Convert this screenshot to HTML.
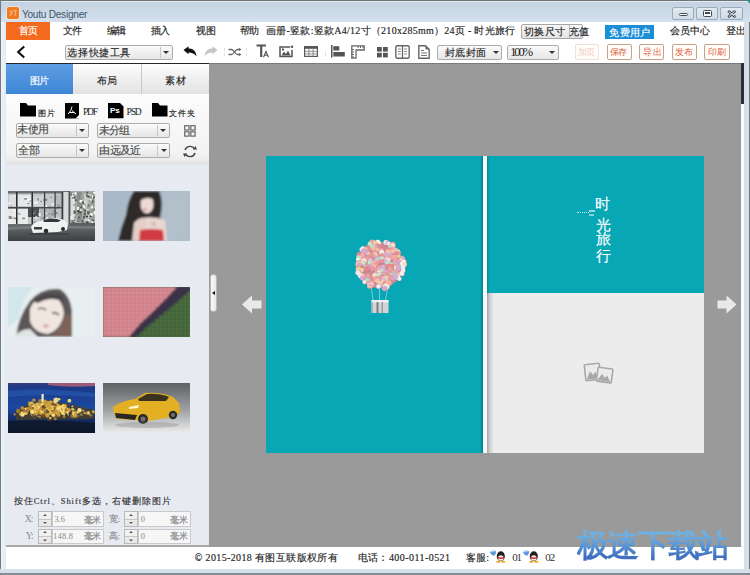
<!DOCTYPE html>
<html><head><meta charset="utf-8">
<style>
*{box-sizing:border-box}
html,body{margin:0;padding:0}
body{width:750px;height:575px;position:relative;overflow:hidden;background:#dbe5ee;font-family:"Liberation Serif",serif;color:#222}
.a{position:absolute}
.t{position:absolute;white-space:nowrap;line-height:1}
.combo{position:absolute;border:1px solid #acacac;border-radius:2px;background:linear-gradient(#fafafa,#e6e6e6)}
.combo .sp{position:absolute;top:1px;bottom:1px;width:1px;background:#c6c6c6}
.tri{position:absolute;width:0;height:0;border-left:3px solid transparent;border-right:3px solid transparent;border-top:3px solid #333}
.obtn{position:absolute;top:43.5px;height:16px;border:1px solid #c7a289;border-radius:2px;background:#fffdfa}
.spin{position:absolute;border:1px solid #b9b9b9;background:linear-gradient(#f4f4f4,#e6e6e6)}
.inp{position:absolute;border:1px solid #c9c9c9;background:#f6f6f6}
.thumb{position:absolute;width:87px;height:50px;overflow:hidden}
</style></head><body>
<!-- title bar -->
<div class="a" style="left:0;top:0;width:750px;height:22px;background:linear-gradient(#6c7476 0,#6c7476 1px,#e2eaee 1px,#e2eaee 2px,#c4d3e1 2px,#d4e0ee 22px)"></div>
<!-- app icon -->
<div class="a" style="left:6px;top:6px;width:14px;height:14px;background:#f2e6dc;border-radius:3px;opacity:0.8"></div>
<div class="a" style="left:7px;top:7px;width:12px;height:11.7px;background:#ef7a22;border-radius:2px"></div>
<svg class="a" style="left:7px;top:7px" width="12" height="12" viewBox="0 0 12 12"><path d="M2.5 3.5 L4.5 6 L3 9 M6 3.5 L4.5 6 M6.5 3.5 H10 M8.3 3.5 V9" stroke="#f9b27a" stroke-width="1.2" fill="none"/></svg>
<!-- window buttons -->
<div class="a" style="left:672px;top:7px;width:22px;height:12.5px;border:1px solid #9aaabb;border-radius:2px;background:linear-gradient(#e2e9f0,#cfdbe6)"></div>
<div class="a" style="left:678.5px;top:12.5px;width:9px;height:3.5px;border:1px solid #3c4a58;border-radius:1.5px;background:#fff"></div>
<div class="a" style="left:696px;top:7px;width:22px;height:12.5px;border:1px solid #9aaabb;border-radius:2px;background:linear-gradient(#e2e9f0,#cfdbe6)"></div>
<div class="a" style="left:702.5px;top:9.5px;width:9px;height:7px;border:1px solid #3c4a58;border-radius:1.5px;background:#fff"></div>
<div class="a" style="left:704.5px;top:12px;width:5px;height:2px;background:#3c4a58"></div>
<div class="a" style="left:720px;top:7px;width:23px;height:12.5px;border:1px solid #9aaabb;border-radius:2px;background:linear-gradient(#e2e9f0,#cfdbe6)"></div>
<svg class="a" style="left:726.5px;top:9.5px" width="10" height="8" viewBox="0 0 10 8"><path d="M2 1.6 L7.5 6.4 M7.5 1.6 L2 6.4" stroke="#3c4a58" stroke-width="2.6" stroke-linecap="round"/><path d="M2 1.6 L7.5 6.4 M7.5 1.6 L2 6.4" stroke="#fff" stroke-width="0.9" stroke-linecap="round"/></svg>

<!-- client white area -->
<div class="a" style="left:6px;top:22px;width:738px;height:41px;background:#fff"></div>

<!-- menu highlights -->
<div class="a" style="left:6px;top:22px;width:44px;height:18px;background:#f46a1f"></div>
<div class="a" style="left:520.5px;top:24px;width:62px;height:14.5px;border:1px solid #a6a6a6;border-radius:2px;background:linear-gradient(#f7f7f7,#e3e3e3)"></div>
<div class="a" style="left:568.5px;top:25px;width:1px;height:13px;background:#b8b8b8"></div>
<div class="a" style="left:604.5px;top:24.5px;width:49.5px;height:14.5px;background:#1b8ed6"></div>

<!-- toolbar -->
<svg class="a" style="left:15px;top:45px" width="12" height="14" viewBox="0 0 12 14"><path d="M9.2 1.5 L3.2 7 L9.2 12.5" stroke="#111" stroke-width="2.1" fill="none"/></svg>
<div class="combo" style="left:65px;top:44.5px;width:108px;height:15.5px"><div class="sp" style="left:93.5px"></div></div>
<div class="tri" style="left:163px;top:51px"></div>

<!-- undo/redo etc -->
<svg class="a" style="left:183px;top:46px" width="14" height="11" viewBox="0 0 14 11"><path d="M0.5 4 L5.5 0.2 L5.5 2.6 C10 2.6 13 5 13.5 10.5 C11.5 7.5 9 6.5 5.5 6.5 L5.5 8.2 Z" fill="#111"/></svg>
<svg class="a" style="left:204px;top:46px" width="14" height="11" viewBox="0 0 14 11"><path d="M13.5 4 L8.5 0.2 L8.5 2.6 C4 2.6 1 5 0.5 10.5 C2.5 7.5 5 6.5 8.5 6.5 L8.5 8.2 Z" fill="#c6c6c6"/></svg>
<div class="a" style="left:223.5px;top:48px;width:1px;height:8px;border-left:1px dotted #d8d8d8"></div>
<div class="a" style="left:245.5px;top:48px;width:1px;height:8px;border-left:1px dotted #d8d8d8"></div>
<svg class="a" style="left:228px;top:48px" width="14" height="8" viewBox="0 0 14 8"><path d="M0.5 1.5 H3.5 C6 1.5 7 6.5 9.5 6.5 H12 M0.5 6.5 H3.5 C6 6.5 7 1.5 9.5 1.5 H12" stroke="#666" stroke-width="1.3" fill="none"/><path d="M11 0 L13.5 1.5 L11 3 Z M11 5 L13.5 6.5 L11 8 Z" fill="#666"/></svg>
<!-- TA -->
<svg class="a" style="left:256px;top:44px" width="15" height="14" viewBox="0 0 15 14"><path d="M0.5 1.5 H10 M5.2 1.5 V13" stroke="#555" stroke-width="2.2" fill="none"/><path d="M7.5 13.3 L10 7.5 L12.5 13.3 M8.5 11.3 H11.5" stroke="#555" stroke-width="1.1" fill="none"/></svg>
<!-- image icon -->
<svg class="a" style="left:279px;top:45px" width="15" height="13" viewBox="0 0 15 13"><path d="M11 2 H1 V11.5 H13 V5" stroke="#555" stroke-width="1.5" fill="none"/><circle cx="13" cy="1.8" r="1.3" fill="#555"/><path d="M2.5 10.5 L5 6.5 L7 9 L9 5.5 L11.5 10.5 Z" fill="#555"/><rect x="3" y="3.5" width="2" height="2" fill="#555"/></svg>
<!-- table -->
<svg class="a" style="left:304px;top:46px" width="14" height="11" viewBox="0 0 14 11"><rect x="0.6" y="0.6" width="12.8" height="9.8" fill="none" stroke="#5a5a5a" stroke-width="1.2"/><rect x="0.6" y="0.6" width="12.8" height="2.2" fill="#555"/><path d="M0.7 5.3 H13.3 M0.7 7.9 H13.3 M4.9 3 V10.3 M9.1 3 V10.3" stroke="#777" stroke-width="0.8"/></svg>
<div class="a" style="left:324.5px;top:51px;width:1px;height:6px;background:#e2e2e2"></div>
<!-- align left -->
<svg class="a" style="left:331px;top:45px" width="14" height="13" viewBox="0 0 14 13"><rect x="0" y="0" width="1.5" height="12.5" fill="#555"/><rect x="2.3" y="1.2" width="6" height="4.3" fill="#555"/><rect x="2.3" y="7" width="11.5" height="4.5" fill="#555"/></svg>
<!-- ruler -->
<svg class="a" style="left:351px;top:45px" width="14" height="14" viewBox="0 0 14 14"><path d="M0.8 0.8 H13.2 V5 H5 V13.2 H0.8 Z" fill="none" stroke="#666" stroke-width="1.3"/><path d="M7 1 V3 M9.5 1 V3 M12 1 V3 M1 7 H3 M1 9.5 H3 M1 12 H3 M1 4.5 H3" stroke="#666" stroke-width="1"/></svg>
<!-- grid4 -->
<svg class="a" style="left:377px;top:46.5px" width="11" height="11" viewBox="0 0 11 11"><rect x="0" y="0" width="4.8" height="4.6" fill="#555"/><rect x="6" y="0" width="4.8" height="4.6" fill="#555"/><rect x="0" y="5.8" width="4.8" height="4.6" fill="#555"/><rect x="6" y="5.8" width="4.8" height="4.6" fill="#555"/></svg>
<!-- book -->
<svg class="a" style="left:395px;top:45px" width="15" height="14" viewBox="0 0 15 14"><rect x="0.8" y="0.8" width="13.4" height="12.4" rx="1.5" fill="none" stroke="#666" stroke-width="1.4"/><path d="M7.5 1 V13" stroke="#666" stroke-width="1.3"/><path d="M3 4 H5.8 M3 6.5 H5.8 M3 9 H5.8 M9.2 4 H12 M9.2 6.5 H12 M9.2 9 H12" stroke="#888" stroke-width="1"/></svg>
<!-- doc -->
<svg class="a" style="left:417.5px;top:45px" width="12" height="14" viewBox="0 0 12 14"><path d="M0.8 0.8 H7.5 L11.2 4.5 V13.2 H0.8 Z" fill="none" stroke="#666" stroke-width="1.4"/><path d="M7.5 0.8 V4.5 H11.2" fill="#666"/><path d="M3 5.5 H6 M3 8 H9 M3 10.5 H9" stroke="#777" stroke-width="1"/></svg>

<div class="combo" style="left:436.5px;top:44.5px;width:65.5px;height:15px"></div>
<div class="tri" style="left:492.5px;top:51px"></div>
<div class="combo" style="left:507px;top:44.5px;width:52px;height:15px"></div>
<div class="tri" style="left:548.5px;top:51px"></div>

<div class="obtn" style="left:574.5px;width:24px;border-color:#ece2dc"></div>
<div class="obtn" style="left:606.5px;width:25px"></div>
<div class="obtn" style="left:639px;width:25px"></div>
<div class="obtn" style="left:671.5px;width:25px"></div>
<div class="obtn" style="left:704px;width:25.5px"></div>

<!-- dark line -->
<div class="a" style="left:6px;top:63px;width:203px;height:1px;background:#23272c"></div>
<div class="a" style="left:209px;top:63px;width:532px;height:1px;background:#7a7a7a"></div>

<!-- canvas -->
<div class="a" style="left:209px;top:64px;width:532px;height:483px;background:#9a9a9a"></div>
<div class="a" style="left:741px;top:64px;width:3px;height:483px;background:#fbfbfb"></div>
<div class="a" style="left:741px;top:63px;width:3px;height:41px;background:#2c3035"></div>

<!-- left panel -->
<div class="a" style="left:6px;top:64px;width:203px;height:483px;background:#e8eaf2"></div>
<div class="a" style="left:6px;top:64px;width:67px;height:30px;background:linear-gradient(#5d9de2,#3d86d6)"></div>
<div class="a" style="left:73px;top:64px;width:136px;height:30px;background:linear-gradient(#fdfdfd,#e2e2e2)"></div>
<div class="a" style="left:141px;top:64px;width:1px;height:30px;background:#c8c8c8"></div>
<div class="a" style="left:6px;top:94px;width:203px;height:71px;background:linear-gradient(#fcfcfc 0,#f3f3f3 58px,#ececec 66px,#e2e2e2 70px,#e6e8ef 71px)"></div>
<div class="a" style="left:6px;top:545px;width:203px;height:2px;background:#a9a9a9"></div>

<!-- panel icons -->
<svg class="a" style="left:20px;top:103px" width="17" height="14" viewBox="0 0 17 14"><path d="M0 0 H6 L8 2.5 H16 V13.5 H0 Z" fill="#000"/></svg>
<svg class="a" style="left:65px;top:102.5px" width="15" height="16" viewBox="0 0 15 16"><rect x="0" y="0" width="14" height="15.5" fill="#000"/><path d="M7 3.5 Q6.5 7.5 3.2 11 M7 7.5 Q9 9.5 11 11 M4.5 9.5 H9.5" stroke="#fff" stroke-width="1" fill="none"/><path d="M10.5 15.5 L14 12 V15.5 Z" fill="#fff"/></svg>
<svg class="a" style="left:108px;top:102.5px" width="16" height="16" viewBox="0 0 16 16"><path d="M0 0 H12 L15.5 3.5 V15.3 H0 Z" fill="#000"/><text x="2" y="10" font-family="Liberation Sans" font-weight="bold" font-size="8" fill="#fff">Ps</text></svg>
<svg class="a" style="left:152px;top:103px" width="17" height="14" viewBox="0 0 17 14"><path d="M0 0 H6 L8 2.5 H15.5 V13.5 H0 Z" fill="#000"/></svg>

<div class="combo" style="left:15.5px;top:122.5px;width:73px;height:15px"><div class="sp" style="left:59px"></div></div>
<div class="tri" style="left:79px;top:129px"></div>
<div class="combo" style="left:97px;top:122.5px;width:72.5px;height:15px"><div class="sp" style="left:58.5px"></div></div>
<div class="tri" style="left:160px;top:129px"></div>
<div class="combo" style="left:15.5px;top:142.5px;width:73px;height:15px"><div class="sp" style="left:59px"></div></div>
<div class="tri" style="left:79px;top:149px"></div>
<div class="combo" style="left:97px;top:142.5px;width:73px;height:15px"><div class="sp" style="left:59px"></div></div>
<div class="tri" style="left:160.5px;top:149px"></div>
<svg class="a" style="left:183.5px;top:124.5px" width="12" height="12" viewBox="0 0 12 12"><rect x="0.7" y="0.7" width="4.3" height="4.3" fill="none" stroke="#666" stroke-width="1.2"/><rect x="6.8" y="0.7" width="4.3" height="4.3" fill="none" stroke="#666" stroke-width="1.2"/><rect x="0.7" y="6.8" width="4.3" height="4.3" fill="none" stroke="#666" stroke-width="1.2"/><rect x="6.8" y="6.8" width="4.3" height="4.3" fill="none" stroke="#666" stroke-width="1.2"/></svg>
<svg class="a" style="left:181.5px;top:144.5px" width="16" height="13" viewBox="0 0 16 13"><path d="M3 5 A5.2 5.2 0 0 1 12.6 4.2 M13 8 A5.2 5.2 0 0 1 3.4 8.8" stroke="#444" stroke-width="1.4" fill="none"/><path d="M11 4.5 L15 4.5 L13.5 1 Z M5 8.5 L1 8.5 L2.5 12 Z" fill="#444"/></svg>

<!-- inputs -->
<div class="spin" style="left:38px;top:511px;width:14px;height:15.5px"></div>
<div class="a" style="left:39px;top:518.5px;width:12px;height:1px;background:#c6c6c6"></div>
<div class="inp" style="left:51.5px;top:511px;width:52px;height:15.5px"></div>
<div class="spin" style="left:38px;top:528.5px;width:14px;height:15px"></div>
<div class="a" style="left:39px;top:535.8px;width:12px;height:1px;background:#c6c6c6"></div>
<div class="inp" style="left:51.5px;top:528.5px;width:52px;height:15px"></div>
<div class="spin" style="left:124px;top:511px;width:14px;height:15.5px"></div>
<div class="a" style="left:125px;top:518.5px;width:12px;height:1px;background:#c6c6c6"></div>
<div class="inp" style="left:137.5px;top:511px;width:53px;height:15.5px"></div>
<div class="spin" style="left:124px;top:528.5px;width:14px;height:15px"></div>
<div class="a" style="left:125px;top:535.8px;width:12px;height:1px;background:#c6c6c6"></div>
<div class="inp" style="left:137.5px;top:528.5px;width:53px;height:15px"></div>
<svg class="a" style="left:38px;top:511px" width="14" height="33" viewBox="0 0 14 33"><path d="M5 5 L7 3 L9 5 Z M5 11 L7 13 L9 11 Z M5 22 L7 20 L9 22 Z M5 28.5 L7 30.5 L9 28.5 Z" fill="#555"/></svg>
<svg class="a" style="left:124px;top:511px" width="14" height="33" viewBox="0 0 14 33"><path d="M5 5 L7 3 L9 5 Z M5 11 L7 13 L9 11 Z M5 22 L7 20 L9 22 Z M5 28.5 L7 30.5 L9 28.5 Z" fill="#555"/></svg>

<!-- status bar -->
<div class="a" style="left:6px;top:546.5px;width:738px;height:22.5px;background:#fff"></div>
<!-- thumbnails -->
<svg class="a" style="left:8px;top:191px" width="87" height="50" viewBox="0 0 87 50">
 <defs><filter id="bl1" x="-5%" y="-5%" width="110%" height="110%"><feGaussianBlur stdDeviation="0.7"/></filter>
 <linearGradient id="fl1" x1="0" y1="0" x2="0" y2="1"><stop offset="0" stop-color="#6a6e70"/><stop offset="1" stop-color="#3c4042"/></linearGradient></defs>
 <rect width="87" height="50" fill="#8a8e90"/>
 <g filter="url(#bl1)">
 <rect x="0" y="0" width="87" height="34" fill="#c4c7c8"/>
 <rect x="0" y="0" width="87" height="2.5" fill="#6a6e70"/>
 <rect x="1" y="4" width="7" height="11" fill="#dcdedf"/><rect x="10" y="4" width="13" height="11" fill="#e4e6e7"/><rect x="26" y="5" width="9" height="10" fill="#d0d3d4"/><rect x="38" y="5" width="8" height="10" fill="#c8cbcc"/><rect x="48" y="4" width="5" height="11" fill="#b8bbbc"/>
 <rect x="0" y="18" width="20" height="15" fill="#e8eaea"/><rect x="20" y="17" width="11" height="9" fill="#4c5052"/><rect x="32" y="18" width="14" height="14" fill="#b0b4b5"/><rect x="47" y="18" width="6" height="14" fill="#c0c3c4"/>
 <rect x="55" y="1" width="6" height="32" fill="#d8dadb"/>
 <rect x="62" y="0" width="25" height="33" fill="#a6aaa6"/>
 <rect x="63" y="2" width="4" height="28" fill="#dcdedb"/><rect x="69" y="1" width="5" height="30" fill="#8c908c"/><rect x="76" y="3" width="5" height="27" fill="#c8cbc6"/><rect x="82" y="1" width="4" height="30" fill="#9a9e9a"/>
<rect x="77.6" y="23.7" width="2.4" height="2.8" fill="#3e423e"/><rect x="85.1" y="0.9" width="2.2" height="1.6" fill="#ffffff"/><rect x="63.3" y="5.0" width="1.7" height="1.6" fill="#e8eae6"/><rect x="75.6" y="18.4" width="2.1" height="2.0" fill="#5a5e5a"/><rect x="66.6" y="27.8" width="1.2" height="3.0" fill="#ffffff"/><rect x="65.5" y="19.8" width="1.2" height="3.4" fill="#7a7e78"/><rect x="62.1" y="24.8" width="2.3" height="1.7" fill="#7a7e78"/><rect x="86.0" y="17.3" width="1.9" height="1.5" fill="#3e423e"/><rect x="86.2" y="6.3" width="1.4" height="1.9" fill="#ffffff"/><rect x="66.1" y="4.7" width="1.5" height="3.0" fill="#5a5e5a"/><rect x="76.7" y="19.1" width="1.5" height="1.8" fill="#3e423e"/><rect x="82.5" y="15.4" width="1.3" height="2.2" fill="#e8eae6"/><rect x="66.4" y="8.2" width="2.4" height="1.9" fill="#5a5e5a"/><rect x="72.1" y="17.6" width="1.5" height="2.4" fill="#ffffff"/><rect x="62.2" y="1.5" width="1.9" height="3.4" fill="#7a7e78"/><rect x="65.0" y="7.9" width="1.5" height="1.9" fill="#ffffff"/><rect x="75.1" y="24.8" width="1.9" height="3.0" fill="#5a5e5a"/><rect x="71.2" y="9.5" width="2.4" height="1.2" fill="#ffffff"/><rect x="70.5" y="19.5" width="1.5" height="3.3" fill="#7a7e78"/><rect x="75.6" y="10.0" width="1.5" height="3.0" fill="#e8eae6"/><rect x="77.7" y="23.1" width="2.5" height="1.4" fill="#e8eae6"/><rect x="63.2" y="31.6" width="2.4" height="1.1" fill="#9a9e98"/><rect x="80.5" y="11.0" width="1.7" height="2.1" fill="#e8eae6"/><rect x="63.4" y="29.3" width="2.2" height="1.8" fill="#5a5e5a"/><rect x="67.2" y="31.4" width="2.4" height="2.6" fill="#9a9e98"/><rect x="81.7" y="3.4" width="1.6" height="1.1" fill="#ffffff"/><rect x="72.5" y="4.5" width="2.3" height="3.4" fill="#9a9e98"/><rect x="73.3" y="15.6" width="1.5" height="1.7" fill="#3e423e"/><rect x="73.8" y="28.9" width="1.6" height="3.5" fill="#5a5e5a"/><rect x="86.0" y="20.1" width="2.3" height="1.5" fill="#ffffff"/><rect x="74.3" y="16.5" width="2.3" height="1.9" fill="#9a9e98"/><rect x="81.7" y="24.8" width="1.9" height="1.1" fill="#3e423e"/><rect x="69.6" y="17.9" width="1.4" height="2.2" fill="#3e423e"/><rect x="81.2" y="22.1" width="2.4" height="1.9" fill="#e8eae6"/><rect x="66.5" y="27.3" width="1.8" height="1.6" fill="#ffffff"/><rect x="78.8" y="14.8" width="2.0" height="3.0" fill="#9a9e98"/><rect x="70.7" y="20.6" width="2.4" height="2.0" fill="#3e423e"/><rect x="85.1" y="5.5" width="1.7" height="1.9" fill="#3e423e"/><rect x="70.4" y="4.5" width="1.3" height="1.9" fill="#7a7e78"/><rect x="83.3" y="9.1" width="2.1" height="2.8" fill="#5a5e5a"/><rect x="66.3" y="25.0" width="1.8" height="3.3" fill="#9a9e98"/><rect x="69.6" y="17.7" width="1.4" height="3.5" fill="#3e423e"/><rect x="66.9" y="18.8" width="2.0" height="1.5" fill="#9a9e98"/><rect x="79.1" y="20.2" width="2.5" height="3.4" fill="#5a5e5a"/><rect x="66.1" y="28.5" width="1.5" height="1.5" fill="#5a5e5a"/><rect x="66.8" y="1.1" width="1.5" height="2.7" fill="#ffffff"/><rect x="63.8" y="6.5" width="2.4" height="1.0" fill="#3e423e"/><rect x="72.1" y="8.9" width="2.3" height="2.7" fill="#ffffff"/><rect x="75.7" y="30.9" width="1.9" height="1.2" fill="#9a9e98"/><rect x="75.6" y="10.9" width="1.4" height="1.9" fill="#9a9e98"/><rect x="65.2" y="13.1" width="2.0" height="1.9" fill="#9a9e98"/><rect x="65.6" y="19.1" width="1.7" height="1.5" fill="#9a9e98"/><rect x="65.3" y="2.9" width="1.0" height="1.3" fill="#3e423e"/><rect x="76.1" y="19.7" width="1.5" height="3.2" fill="#7a7e78"/><rect x="76.1" y="13.7" width="1.7" height="2.2" fill="#7a7e78"/><rect x="79.7" y="12.3" width="1.9" height="1.6" fill="#7a7e78"/><rect x="86.5" y="15.9" width="1.0" height="3.4" fill="#ffffff"/><rect x="69.7" y="29.7" width="1.7" height="1.3" fill="#7a7e78"/><rect x="77.5" y="14.2" width="1.1" height="1.3" fill="#e8eae6"/><rect x="71.8" y="15.4" width="1.4" height="3.3" fill="#9a9e98"/><rect x="81.5" y="7.9" width="2.3" height="2.8" fill="#e8eae6"/><rect x="69.1" y="15.8" width="1.8" height="3.2" fill="#ffffff"/><rect x="84.0" y="28.6" width="2.1" height="1.8" fill="#5a5e5a"/><rect x="75.3" y="10.8" width="2.1" height="1.1" fill="#e8eae6"/><rect x="70.7" y="21.8" width="1.2" height="1.0" fill="#9a9e98"/><rect x="75.8" y="21.9" width="2.3" height="2.4" fill="#5a5e5a"/><rect x="62.4" y="24.9" width="1.9" height="2.7" fill="#ffffff"/><rect x="85.8" y="20.8" width="1.7" height="2.7" fill="#ffffff"/><rect x="80.0" y="28.8" width="2.2" height="1.2" fill="#ffffff"/><rect x="82.9" y="22.2" width="1.9" height="2.6" fill="#ffffff"/><rect x="73.8" y="10.0" width="1.7" height="2.4" fill="#7a7e78"/><rect x="74.4" y="10.6" width="1.6" height="2.4" fill="#7a7e78"/><rect x="63.2" y="23.4" width="2.2" height="3.0" fill="#e8eae6"/><rect x="78.6" y="0.8" width="1.6" height="1.2" fill="#3e423e"/><rect x="72.1" y="15.6" width="2.3" height="1.5" fill="#5a5e5a"/><rect x="78.1" y="30.5" width="2.3" height="3.5" fill="#3e423e"/><rect x="79.6" y="14.0" width="1.9" height="2.0" fill="#7a7e78"/><rect x="66.0" y="19.9" width="1.8" height="2.7" fill="#5a5e5a"/><rect x="80.6" y="9.0" width="1.9" height="2.9" fill="#9a9e98"/><rect x="84.0" y="4.3" width="1.1" height="2.7" fill="#ffffff"/><rect x="74.2" y="11.3" width="1.6" height="1.1" fill="#3e423e"/><rect x="79.4" y="4.8" width="2.0" height="1.7" fill="#3e423e"/><rect x="85.5" y="17.6" width="1.4" height="2.4" fill="#7a7e78"/><rect x="68.4" y="24.0" width="2.5" height="3.0" fill="#9a9e98"/><rect x="83.6" y="14.5" width="1.3" height="2.8" fill="#ffffff"/><rect x="78.4" y="2.7" width="1.1" height="3.2" fill="#3e423e"/><rect x="74.7" y="14.5" width="2.3" height="2.2" fill="#ffffff"/><rect x="70.1" y="25.5" width="1.8" height="2.0" fill="#5a5e5a"/><rect x="83.2" y="30.2" width="2.0" height="1.6" fill="#ffffff"/><rect x="64.9" y="31.1" width="1.7" height="1.5" fill="#3e423e"/><rect x="37.2" y="13.9" width="1.9" height="2.9" fill="#f4f6f6" opacity="0.8"/><rect x="37.4" y="26.1" width="1.4" height="2.7" fill="#6a6e70" opacity="0.8"/><rect x="34.3" y="26.3" width="3.9" height="1.7" fill="#6a6e70" opacity="0.8"/><rect x="1.9" y="31.8" width="3.2" height="1.8" fill="#f4f6f6" opacity="0.8"/><rect x="5.1" y="4.0" width="1.6" height="2.0" fill="#f4f6f6" opacity="0.8"/><rect x="49.7" y="22.2" width="1.0" height="1.9" fill="#a8acae" opacity="0.8"/><rect x="47.2" y="21.0" width="2.0" height="1.9" fill="#6a6e70" opacity="0.8"/><rect x="10.2" y="21.9" width="2.1" height="1.8" fill="#8a8e90" opacity="0.8"/><rect x="46.7" y="7.4" width="1.3" height="2.6" fill="#a8acae" opacity="0.8"/><rect x="39.8" y="22.5" width="2.4" height="1.1" fill="#8a8e90" opacity="0.8"/><rect x="49.0" y="13.7" width="3.1" height="2.3" fill="#8a8e90" opacity="0.8"/><rect x="25.0" y="30.4" width="3.4" height="1.6" fill="#8a8e90" opacity="0.8"/><rect x="24.1" y="10.0" width="1.1" height="2.4" fill="#f4f6f6" opacity="0.8"/><rect x="30.5" y="22.0" width="2.2" height="2.9" fill="#ffffff" opacity="0.8"/><rect x="19.3" y="12.0" width="2.1" height="1.1" fill="#6a6e70" opacity="0.8"/><rect x="52.7" y="16.6" width="1.5" height="1.4" fill="#f4f6f6" opacity="0.8"/><rect x="2.3" y="20.7" width="1.0" height="1.1" fill="#a8acae" opacity="0.8"/><rect x="41.3" y="14.9" width="1.1" height="2.7" fill="#8a8e90" opacity="0.8"/><rect x="44.4" y="19.4" width="3.1" height="1.5" fill="#8a8e90" opacity="0.8"/><rect x="42.6" y="5.7" width="1.2" height="1.5" fill="#6a6e70" opacity="0.8"/><rect x="2.7" y="14.5" width="1.1" height="2.7" fill="#8a8e90" opacity="0.8"/><rect x="23.6" y="21.6" width="3.9" height="1.4" fill="#8a8e90" opacity="0.8"/><rect x="36.9" y="21.6" width="2.6" height="1.2" fill="#f4f6f6" opacity="0.8"/><rect x="16.6" y="6.1" width="4.0" height="1.3" fill="#ffffff" opacity="0.8"/><rect x="4.0" y="24.2" width="1.1" height="2.1" fill="#ffffff" opacity="0.8"/><rect x="25.8" y="19.6" width="2.6" height="1.3" fill="#6a6e70" opacity="0.8"/><rect x="0.7" y="24.9" width="3.7" height="3.0" fill="#6a6e70" opacity="0.8"/><rect x="29.4" y="7.0" width="1.3" height="2.5" fill="#6a6e70" opacity="0.8"/><rect x="43.4" y="12.1" width="2.6" height="1.9" fill="#f4f6f6" opacity="0.8"/><rect x="37.0" y="26.2" width="3.0" height="1.6" fill="#ffffff" opacity="0.8"/><rect x="26.1" y="10.2" width="3.4" height="2.8" fill="#f4f6f6" opacity="0.8"/><rect x="46.9" y="5.1" width="2.1" height="2.5" fill="#a8acae" opacity="0.8"/><rect x="0.0" y="11.3" width="2.7" height="1.9" fill="#f4f6f6" opacity="0.8"/><rect x="43.3" y="22.0" width="3.2" height="2.4" fill="#8a8e90" opacity="0.8"/><rect x="14.2" y="26.6" width="2.7" height="1.6" fill="#6a6e70" opacity="0.8"/><rect x="16.2" y="7.0" width="3.0" height="1.6" fill="#6a6e70" opacity="0.8"/><rect x="3.4" y="25.1" width="1.1" height="1.2" fill="#ffffff" opacity="0.8"/><rect x="51.4" y="27.0" width="3.6" height="2.9" fill="#6a6e70" opacity="0.8"/><rect x="32.4" y="9.7" width="1.4" height="1.4" fill="#6a6e70" opacity="0.8"/><rect x="19.0" y="7.7" width="3.5" height="2.5" fill="#ffffff" opacity="0.8"/><rect x="5.1" y="18.4" width="2.9" height="1.3" fill="#f4f6f6" opacity="0.8"/><rect x="40.5" y="15.6" width="1.4" height="1.6" fill="#6a6e70" opacity="0.8"/><rect x="48.5" y="16.4" width="1.5" height="1.1" fill="#6a6e70" opacity="0.8"/><rect x="35.4" y="7.7" width="3.9" height="2.2" fill="#6a6e70" opacity="0.8"/><rect x="5.5" y="26.6" width="3.1" height="1.4" fill="#6a6e70" opacity="0.8"/><rect x="0.1" y="29.4" width="2.4" height="2.8" fill="#f4f6f6" opacity="0.8"/><rect x="20.8" y="9.3" width="3.5" height="1.6" fill="#a8acae" opacity="0.8"/><rect x="27.3" y="25.2" width="2.1" height="2.6" fill="#f4f6f6" opacity="0.8"/><rect x="43.2" y="22.2" width="2.9" height="1.8" fill="#8a8e90" opacity="0.8"/><rect x="7.6" y="27.1" width="2.1" height="1.2" fill="#6a6e70" opacity="0.8"/>
 <rect x="8" y="1" width="1.5" height="34" fill="#2a2e30"/><rect x="23.5" y="1" width="1.5" height="33" fill="#2e3234"/><rect x="36" y="1" width="1.2" height="32" fill="#3a3e40"/><rect x="46.5" y="1" width="1.2" height="33" fill="#3a3e40"/><rect x="53.5" y="1" width="1.8" height="34" fill="#3a3d3f"/><rect x="60.5" y="0" width="1.5" height="34" fill="#505456"/>
 <rect x="0" y="16" width="55" height="1.5" fill="#44484a"/>
 <rect x="0" y="33" width="87" height="17" fill="url(#fl1)"/><path d="M0 36 Q40 33 87 35 V38 Q40 36 0 39 Z" fill="#8a8e90" opacity="0.5"/>
 <rect x="62" y="32" width="25" height="3" fill="#5a5e5e"/>
 <path d="M23 36 Q25 31 36 29 L41 27 Q50 26 56 29 L60 33 L59 39 L50 41 L25 42 Z" fill="#f0f2f2"/>
 <path d="M35 29.5 L41 27.5 Q49 27 53 29.5 L50 31 H36 Z" fill="#34383b"/>
 <rect x="26" y="36" width="8" height="2.5" fill="#3a3d40"/>
 <circle cx="38" cy="40" r="2.3" fill="#262a2c"/><circle cx="55" cy="38" r="2" fill="#262a2c"/>
 <path d="M20 42 H62 L60 44 H22 Z" fill="#34383a" opacity="0.6"/>
 </g>
</svg>
<svg class="a" style="left:103px;top:191px" width="87" height="50" viewBox="0 0 87 50">
 <defs><filter id="bl2" x="-10%" y="-10%" width="120%" height="120%"><feGaussianBlur stdDeviation="1.1"/></filter></defs>
 <rect width="87" height="50" fill="#abbac8"/>
 <g filter="url(#bl2)">
 <rect x="-5" y="-5" width="97" height="60" fill="#aab9c7"/>
 <rect x="60" y="0" width="27" height="50" fill="#b2c0cc"/>
 <path d="M31 0 H56 Q60 8 58 22 L56 30 L48 30 L40 34 L34 44 L31 50 H15 Q18 36 23 24 Q25 8 31 0 Z" fill="#2e292b"/>
 <ellipse cx="44" cy="13" rx="6.5" ry="9.5" fill="#ecdad4"/>
 <path d="M36 3 Q44 -1 53 4 L52 9 Q45 5 38 9 Z" fill="#2e292b"/>
 <path d="M40 27 Q50 25 62 29 L64 50 H38 Z" fill="#e9d6d0"/>
 <path d="M31 32 Q36 26 43 27 L42 40 L37 50 H29 Z" fill="#e4cfc7"/>
 <path d="M37 39 Q48 37 60 39 L61 50 H36 Z" fill="#d23a42"/>
 <path d="M47 32 Q50 30 53 32 L52 36 Z" fill="#d0b8b0"/>
 <ellipse cx="42" cy="18.5" rx="2" ry="1" fill="#d88890"/>
 </g>
</svg>
<svg class="a" style="left:8px;top:287px" width="87" height="50" viewBox="0 0 87 50">
 <defs><filter id="bl3" x="-10%" y="-10%" width="120%" height="120%"><feGaussianBlur stdDeviation="1.2"/></filter></defs>
 <rect width="87" height="50" fill="#e4ecee"/>
 <g filter="url(#bl3)">
 <rect x="-5" y="-5" width="97" height="60" fill="#e8eff1"/>
 <path d="M-5 -5 H28 Q14 12 10 32 L-5 44 Z" fill="#d2e6ec"/>
 <path d="M8 50 Q10 30 22 14 Q34 0 52 2 Q62 8 64 24 L64 50 Z" fill="#5c5759"/>
 <path d="M22 22 Q28 7 44 8 Q54 12 56 26 Q54 42 40 47 Q26 46 22 34 Z" fill="#f0e5df"/>
 <path d="M24 14 Q38 3 54 8 L57 16 Q44 8 30 16 Z" fill="#4c4749"/>
 <path d="M42 50 Q54 42 58 28 L64 26 L63 50 Z" fill="#7e625a"/>
 <path d="M6 50 Q12 42 22 42 L30 50 Z" fill="#dfe3e4"/>
 <path d="M30 22 Q34 20 38 23" stroke="#3a3436" stroke-width="1.3" fill="none"/>
 <path d="M44 26 Q48 25 51 28" stroke="#3a3436" stroke-width="1.3" fill="none"/>
 <ellipse cx="38" cy="39" rx="3" ry="1.4" fill="#dc9c9e"/>
 </g>
</svg>
<svg class="a" style="left:103px;top:287px" width="87" height="50" viewBox="0 0 87 50">
 <defs><filter id="bl4" x="-5%" y="-5%" width="110%" height="110%"><feGaussianBlur stdDeviation="0.9"/></filter>
 <pattern id="pk" width="4" height="4" patternUnits="userSpaceOnUse"><rect width="4" height="4" fill="#c87882"/><circle cx="2" cy="2" r="1.3" fill="#e8a0a8"/></pattern>
 <pattern id="gr" width="4" height="4" patternUnits="userSpaceOnUse"><rect width="4" height="4" fill="#3c5a34"/><circle cx="2" cy="2" r="1.3" fill="#5c8048"/></pattern></defs>
 <rect width="87" height="50" fill="#4d6a3e"/>
 <g filter="url(#bl4)">
 <path d="M0 0 H74 Q56 20 38 36 L26 50 H0 Z" fill="url(#pk)"/>
 <path d="M74 0 H87 V4 Q62 26 44 40 L34 50 H26 L38 36 Q56 20 74 0 Z" fill="#3a3048"/>
 <path d="M87 4 V50 H34 L44 40 Q62 26 87 4 Z" fill="url(#gr)"/>
 </g>
</svg>
<svg class="a" style="left:8px;top:383px" width="87" height="50" viewBox="0 0 87 50">
 <defs><filter id="bl5" x="-10%" y="-10%" width="120%" height="120%"><feGaussianBlur stdDeviation="0.7"/></filter>
 <linearGradient id="sk5" x1="0" y1="0" x2="0" y2="1"><stop offset="0" stop-color="#3a3c78"/><stop offset="0.08" stop-color="#1c3a88"/><stop offset="0.5" stop-color="#1a48a0"/><stop offset="0.75" stop-color="#142a60"/><stop offset="1" stop-color="#0a1428"/></linearGradient></defs>
 <rect width="87" height="50" fill="url(#sk5)"/>
 <g filter="url(#bl5)">
 <path d="M40 0 H87 V3 Q60 5 40 2 Z" fill="#9a5a78"/>
 <path d="M0 8 Q30 4 87 10 V14 Q40 10 0 14 Z" fill="#2a5cb0" opacity="0.6"/>
 <path d="M8 28 Q20 18 40 17 Q60 20 86 27 L86 36 L8 37 Z" fill="#4a4028" opacity="0.8"/>
 <path d="M20 24 Q30 17 44 18 Q54 21 58 28 L44 32 H24 Z" fill="#c8a040"/>
 <circle cx="39.3" cy="32.6" r="2.1" fill="#d0a040"/><circle cx="19.8" cy="28.0" r="0.8" fill="#f8e08a"/><circle cx="43.7" cy="24.0" r="1.1" fill="#e8c050"/><circle cx="34.4" cy="21.5" r="1.5" fill="#f8e08a"/><circle cx="32.9" cy="25.0" r="1.0" fill="#c89038"/><circle cx="50.4" cy="25.0" r="1.7" fill="#f2d46a"/><circle cx="59.7" cy="30.0" r="0.9" fill="#f8e08a"/><circle cx="42.9" cy="18.8" r="1.5" fill="#d0a040"/><circle cx="32.4" cy="17.9" r="1.9" fill="#c89038"/><circle cx="17.7" cy="30.2" r="1.4" fill="#f8e08a"/><circle cx="64.4" cy="23.4" r="0.9" fill="#f2d46a"/><circle cx="27.2" cy="27.1" r="1.4" fill="#c89038"/><circle cx="29.7" cy="24.3" r="2.0" fill="#f8e08a"/><circle cx="22.5" cy="24.5" r="1.6" fill="#a07830"/><circle cx="55.5" cy="23.1" r="2.0" fill="#f2d46a"/><circle cx="58.8" cy="26.6" r="1.8" fill="#e8c050"/><circle cx="29.9" cy="32.0" r="1.6" fill="#f8e08a"/><circle cx="35.8" cy="24.0" r="2.2" fill="#6a5030"/><circle cx="37.2" cy="29.3" r="2.0" fill="#a07830"/><circle cx="44.0" cy="26.9" r="0.9" fill="#6a5030"/><circle cx="40.3" cy="26.5" r="1.9" fill="#a07830"/><circle cx="40.9" cy="26.0" r="1.9" fill="#f8e08a"/><circle cx="24.6" cy="31.2" r="2.0" fill="#f8e08a"/><circle cx="54.5" cy="26.4" r="1.2" fill="#f2d46a"/><circle cx="54.8" cy="29.8" r="2.1" fill="#f2d46a"/><circle cx="49.4" cy="26.3" r="1.0" fill="#d0a040"/><circle cx="65.2" cy="29.4" r="1.3" fill="#d0a040"/><circle cx="56.0" cy="33.8" r="1.4" fill="#a07830"/><circle cx="18.0" cy="26.2" r="1.8" fill="#f8e08a"/><circle cx="68.1" cy="34.3" r="1.5" fill="#6a5030"/><circle cx="17.7" cy="30.0" r="2.1" fill="#e8c050"/><circle cx="28.0" cy="28.3" r="1.6" fill="#d0a040"/><circle cx="52.5" cy="27.3" r="1.2" fill="#f8e08a"/><circle cx="24.7" cy="31.2" r="0.9" fill="#e8c050"/><circle cx="27.1" cy="23.4" r="2.1" fill="#c89038"/><circle cx="29.2" cy="24.7" r="0.8" fill="#a07830"/><circle cx="57.5" cy="29.5" r="1.2" fill="#d0a040"/><circle cx="19.9" cy="28.6" r="1.0" fill="#d0a040"/><circle cx="47.3" cy="34.0" r="1.6" fill="#6a5030"/><circle cx="33.8" cy="31.2" r="1.9" fill="#6a5030"/><circle cx="58.9" cy="25.8" r="1.2" fill="#e8c050"/><circle cx="42.3" cy="35.0" r="1.3" fill="#e8c050"/><circle cx="29.1" cy="21.1" r="0.9" fill="#f2d46a"/><circle cx="32.5" cy="30.6" r="1.1" fill="#6a5030"/><circle cx="51.1" cy="16.3" r="1.3" fill="#f2d46a"/><circle cx="20.9" cy="19.4" r="1.2" fill="#a07830"/><circle cx="38.8" cy="25.8" r="1.2" fill="#e8c050"/><circle cx="47.4" cy="22.0" r="1.2" fill="#6a5030"/><circle cx="45.1" cy="21.0" r="1.7" fill="#6a5030"/><circle cx="25.6" cy="24.5" r="1.9" fill="#f8e08a"/><circle cx="36.3" cy="31.1" r="1.2" fill="#a07830"/><circle cx="34.6" cy="26.5" r="1.0" fill="#a07830"/><circle cx="71.5" cy="27.3" r="2.2" fill="#f8e08a"/><circle cx="6.6" cy="31.4" r="1.1" fill="#c89038"/><circle cx="37.3" cy="18.4" r="1.8" fill="#c89038"/><circle cx="55.1" cy="25.7" r="2.0" fill="#e8c050"/><circle cx="61.4" cy="17.7" r="1.9" fill="#f2d46a"/><circle cx="67.1" cy="29.7" r="1.5" fill="#c89038"/><circle cx="47.2" cy="35.8" r="1.6" fill="#a07830"/><circle cx="61.1" cy="27.6" r="1.5" fill="#e8c050"/><circle cx="38.2" cy="27.9" r="1.4" fill="#f8e08a"/><circle cx="55.9" cy="24.7" r="1.0" fill="#d0a040"/><circle cx="55.2" cy="26.0" r="1.9" fill="#6a5030"/><circle cx="32.5" cy="29.4" r="2.0" fill="#f8e08a"/><circle cx="45.6" cy="29.3" r="2.1" fill="#d0a040"/><circle cx="47.0" cy="19.1" r="1.5" fill="#f2d46a"/><circle cx="25.2" cy="25.0" r="1.2" fill="#6a5030"/><circle cx="36.0" cy="32.5" r="0.9" fill="#a07830"/><circle cx="26.5" cy="34.5" r="0.9" fill="#6a5030"/><circle cx="43.0" cy="28.7" r="1.5" fill="#f2d46a"/><circle cx="59.6" cy="28.5" r="1.5" fill="#f8e08a"/><circle cx="33.1" cy="30.6" r="1.3" fill="#d0a040"/><circle cx="28.8" cy="29.4" r="1.1" fill="#d0a040"/><circle cx="34.6" cy="29.0" r="0.8" fill="#f8e08a"/><circle cx="33.8" cy="19.1" r="1.0" fill="#f8e08a"/><circle cx="24.7" cy="31.4" r="1.6" fill="#6a5030"/><circle cx="35.3" cy="26.0" r="0.9" fill="#a07830"/><circle cx="21.5" cy="21.5" r="1.4" fill="#d0a040"/><circle cx="32.6" cy="22.3" r="1.1" fill="#e8c050"/><circle cx="35.6" cy="33.0" r="1.4" fill="#6a5030"/><circle cx="12.3" cy="31.2" r="1.3" fill="#d0a040"/><circle cx="57.8" cy="22.2" r="1.0" fill="#d0a040"/><circle cx="25.9" cy="17.1" r="1.7" fill="#c89038"/><circle cx="56.9" cy="21.8" r="1.0" fill="#c89038"/><circle cx="30.8" cy="32.0" r="1.6" fill="#6a5030"/><circle cx="45.8" cy="27.1" r="1.3" fill="#6a5030"/><circle cx="20.2" cy="26.0" r="2.0" fill="#c89038"/><circle cx="39.3" cy="27.9" r="2.0" fill="#6a5030"/><circle cx="44.8" cy="27.4" r="2.0" fill="#a07830"/><circle cx="55.6" cy="25.3" r="0.9" fill="#6a5030"/><circle cx="56.0" cy="26.9" r="1.8" fill="#f8e08a"/><circle cx="56.2" cy="31.7" r="0.9" fill="#f8e08a"/><circle cx="29.9" cy="32.2" r="0.9" fill="#6a5030"/><circle cx="58.2" cy="26.9" r="1.7" fill="#a07830"/><circle cx="38.3" cy="22.5" r="1.6" fill="#d0a040"/><circle cx="54.6" cy="24.8" r="1.3" fill="#f2d46a"/><circle cx="41.0" cy="37.3" r="1.8" fill="#6a5030"/><circle cx="49.4" cy="32.8" r="1.6" fill="#6a5030"/><circle cx="56.9" cy="23.9" r="1.7" fill="#e8c050"/><circle cx="44.4" cy="25.5" r="1.5" fill="#f2d46a"/><circle cx="16.4" cy="27.7" r="1.6" fill="#a07830"/><circle cx="42.8" cy="25.1" r="1.1" fill="#6a5030"/><circle cx="27.5" cy="25.0" r="2.0" fill="#e8c050"/><circle cx="14.3" cy="25.1" r="1.8" fill="#c89038"/><circle cx="14.5" cy="31.6" r="2.2" fill="#f8e08a"/><circle cx="47.2" cy="24.5" r="1.5" fill="#d0a040"/><circle cx="31.6" cy="28.9" r="1.1" fill="#d0a040"/><circle cx="10.2" cy="28.0" r="2.2" fill="#a07830"/><circle cx="19.2" cy="27.8" r="1.6" fill="#a07830"/><circle cx="54.6" cy="23.2" r="1.5" fill="#f2d46a"/><circle cx="33.0" cy="18.3" r="1.9" fill="#a07830"/><circle cx="41.2" cy="26.1" r="2.0" fill="#e8c050"/><circle cx="23.5" cy="20.7" r="2.1" fill="#f2d46a"/><circle cx="44.3" cy="24.3" r="1.9" fill="#e8c050"/><circle cx="50.7" cy="31.8" r="2.0" fill="#c89038"/><circle cx="46.7" cy="25.0" r="0.9" fill="#6a5030"/><circle cx="40.5" cy="28.8" r="0.9" fill="#6a5030"/><circle cx="60.2" cy="31.7" r="0.9" fill="#d0a040"/><circle cx="16.2" cy="29.2" r="0.8" fill="#d0a040"/><circle cx="30.4" cy="31.1" r="0.9" fill="#a07830"/><circle cx="23.8" cy="21.2" r="1.3" fill="#a07830"/><circle cx="31.2" cy="26.4" r="0.9" fill="#d0a040"/><circle cx="24.3" cy="29.0" r="2.1" fill="#f8e08a"/><circle cx="65.3" cy="33.1" r="1.7" fill="#d0a040"/><circle cx="27.6" cy="30.6" r="1.7" fill="#c89038"/><circle cx="23.6" cy="20.3" r="1.0" fill="#d0a040"/><circle cx="50.0" cy="25.6" r="1.6" fill="#f8e08a"/><circle cx="50.4" cy="30.4" r="0.9" fill="#d0a040"/><circle cx="31.8" cy="34.0" r="1.1" fill="#c89038"/><circle cx="26.0" cy="22.0" r="1.3" fill="#e8c050"/><circle cx="51.5" cy="24.6" r="2.1" fill="#f2d46a"/><circle cx="45.9" cy="30.1" r="1.7" fill="#c89038"/><circle cx="27.6" cy="28.8" r="1.4" fill="#e8c050"/><circle cx="34.7" cy="29.6" r="1.0" fill="#f2d46a"/><circle cx="45.4" cy="32.2" r="1.8" fill="#f8e08a"/><circle cx="31.0" cy="29.7" r="0.9" fill="#a07830"/><circle cx="48.5" cy="30.9" r="1.1" fill="#d0a040"/><circle cx="39.6" cy="22.8" r="2.1" fill="#d0a040"/><circle cx="13.9" cy="29.6" r="1.3" fill="#f2d46a"/><circle cx="41.9" cy="25.2" r="1.6" fill="#d0a040"/><circle cx="78.4" cy="30.5" r="0.8" fill="#8a7040"/><circle cx="78.9" cy="30.5" r="1.4" fill="#8a7040"/><circle cx="82.0" cy="32.0" r="1.3" fill="#8a7040"/><circle cx="83.2" cy="32.4" r="1.2" fill="#8a7040"/><circle cx="75.3" cy="27.6" r="1.1" fill="#c8a048"/><circle cx="67.9" cy="32.7" r="1.6" fill="#c8a048"/><circle cx="85.6" cy="29.1" r="1.6" fill="#8a7040"/><circle cx="68.4" cy="30.0" r="1.4" fill="#8a7040"/><circle cx="68.1" cy="32.9" r="0.7" fill="#c8a048"/><circle cx="65.1" cy="31.1" r="1.5" fill="#e8c860"/><circle cx="77.9" cy="29.9" r="1.3" fill="#8a7040"/><circle cx="65.4" cy="32.3" r="0.7" fill="#e8c860"/><circle cx="73.5" cy="31.2" r="0.8" fill="#c8a048"/><circle cx="67.6" cy="31.3" r="0.8" fill="#e8c860"/><circle cx="81.4" cy="31.0" r="0.7" fill="#e8c860"/><circle cx="76.7" cy="30.0" r="1.2" fill="#c8a048"/><circle cx="85.1" cy="28.6" r="1.4" fill="#c8a048"/><circle cx="63.6" cy="32.9" r="1.5" fill="#8a7040"/><circle cx="60.9" cy="26.6" r="1.7" fill="#c8a048"/><circle cx="65.5" cy="26.5" r="1.1" fill="#e8c860"/><circle cx="80.4" cy="29.9" r="1.5" fill="#e8c860"/><circle cx="71.0" cy="32.8" r="0.9" fill="#8a7040"/><circle cx="73.4" cy="31.6" r="1.6" fill="#8a7040"/><circle cx="65.6" cy="29.9" r="1.2" fill="#e8c860"/><circle cx="80.4" cy="29.2" r="1.2" fill="#e8c860"/><circle cx="61.0" cy="28.1" r="1.1" fill="#c8a048"/><circle cx="69.8" cy="29.2" r="1.5" fill="#e8c860"/><circle cx="67.0" cy="29.0" r="1.2" fill="#c8a048"/><circle cx="64.3" cy="26.2" r="1.1" fill="#8a7040"/><circle cx="64.5" cy="26.2" r="1.3" fill="#e8c860"/>
 <rect x="33.5" y="11" width="2.2" height="8" fill="#f0f0c0"/>
 <circle cx="48" cy="17" r="2.6" fill="#e8d890"/>
 <path d="M0 38 Q40 36 87 40 V50 H0 Z" fill="#0c1628" opacity="0.85"/>
 </g>
</svg>
<svg class="a" style="left:103px;top:383px" width="87" height="50" viewBox="0 0 87 50">
 <defs><filter id="bl6" x="-5%" y="-5%" width="110%" height="110%"><feGaussianBlur stdDeviation="0.7"/></filter><linearGradient id="g6" x1="0" y1="0" x2="0" y2="1"><stop offset="0" stop-color="#5e6164"/><stop offset="0.55" stop-color="#a0a2a4"/><stop offset="1" stop-color="#ececec"/></linearGradient></defs>
 <rect width="87" height="50" fill="url(#g6)"/>
 <g filter="url(#bl6)">
 <path d="M10 24 Q18 18 32 16 L42 10 Q58 9 70 14 L76 20 L77 30 L70 34 L44 38 L14 36 L11 30 Z" fill="#e2b022"/>
 <path d="M35 16 L44 11 Q56 10 66 14 L63 18 H36 Z" fill="#3a3224"/>
 <path d="M12 30 L34 32 L32 37 L13 35 Z" fill="#2c2820"/>
 <circle cx="40" cy="36" r="5" fill="#2a2a2a"/><circle cx="70" cy="32" r="4.2" fill="#2a2a2a"/>
 <circle cx="40" cy="36" r="2.5" fill="#707070"/><circle cx="70" cy="32" r="2" fill="#707070"/>
 <path d="M26 24 L36 22 L35 25 L26 26 Z" fill="#fff5d0"/>
 <ellipse cx="44" cy="42" rx="32" ry="3" fill="#808080" opacity="0.35"/>
 </g>
</svg>

<!-- collapse handle -->
<div class="a" style="left:210px;top:274px;width:6.5px;height:38px;border:1px solid #b8b8b8;border-radius:3px;background:linear-gradient(90deg,#fafafa,#e8e8e8)"></div>
<div class="a" style="left:212px;top:291px;width:0;height:0;border-top:2.5px solid transparent;border-bottom:2.5px solid transparent;border-right:3px solid #111"></div>

<!-- arrows -->
<svg class="a" style="left:241px;top:295px" width="21" height="19" viewBox="0 0 21 19"><path d="M1 9.5 L11 0.5 V5.5 H20.5 V13.5 H11 V18.5 Z" fill="#e9e9e9"/></svg>
<svg class="a" style="left:717px;top:295px" width="20" height="19" viewBox="0 0 20 19"><path d="M19.5 9.5 L9.5 0.5 V5.5 H0.5 V13.5 H9.5 V18.5 Z" fill="#e9e9e9"/></svg>

<!-- pages -->
<div class="a" style="left:266px;top:156px;width:217px;height:296.5px;background:#08a7b6"></div>
<div class="a" style="left:480px;top:156px;width:3px;height:296.5px;background:linear-gradient(90deg,#08a7b6,#077c88)"></div>
<div class="a" style="left:483px;top:156px;width:4px;height:296.5px;background:#f4fbfc"></div>
<div class="a" style="left:487px;top:156px;width:217px;height:137px;background:#08a7b6"></div>
<div class="a" style="left:487px;top:293px;width:217px;height:159.5px;background:#ececec"></div>
<div class="a" style="left:487px;top:156px;width:3px;height:137px;background:linear-gradient(90deg,#088a96,#08a7b6)"></div>
<div class="a" style="left:487px;top:293px;width:7px;height:159.5px;background:linear-gradient(90deg,#a4a4a4,#d0d0d0 40%,#ececec)"></div>

<!-- balloon -->
<svg class="a" style="left:350px;top:236px" width="60" height="80" viewBox="0 0 60 80">
 <g><ellipse cx="29.5" cy="28.7" rx="24.0" ry="23.3" fill="#c98c94"/><circle cx="28.4" cy="6.0" r="2.0" fill="#b77a86" opacity="0.5"/><circle cx="27.9" cy="5.4" r="2.0" fill="#b4d9c2"/><circle cx="24.2" cy="6.5" r="2.2" fill="#b77a86" opacity="0.5"/><circle cx="23.7" cy="5.9" r="2.2" fill="#f4c3ad"/><circle cx="28.1" cy="6.6" r="2.1" fill="#b77a86" opacity="0.5"/><circle cx="27.6" cy="6.0" r="2.1" fill="#ffffff"/><circle cx="22.6" cy="6.8" r="2.7" fill="#b77a86" opacity="0.5"/><circle cx="22.1" cy="6.2" r="2.7" fill="#eba39a"/><circle cx="36.4" cy="7.1" r="2.4" fill="#b77a86" opacity="0.5"/><circle cx="35.9" cy="6.5" r="2.4" fill="#f6eeee"/><circle cx="38.5" cy="7.3" r="2.1" fill="#b77a86" opacity="0.5"/><circle cx="38.0" cy="6.7" r="2.1" fill="#e99aa8"/><circle cx="28.7" cy="7.7" r="2.5" fill="#b77a86" opacity="0.5"/><circle cx="28.2" cy="7.1" r="2.5" fill="#ffffff"/><circle cx="38.1" cy="7.7" r="2.2" fill="#b77a86" opacity="0.5"/><circle cx="37.6" cy="7.1" r="2.2" fill="#cdb6dc"/><circle cx="26.1" cy="7.9" r="2.5" fill="#b77a86" opacity="0.5"/><circle cx="25.6" cy="7.3" r="2.5" fill="#f1cda3"/><circle cx="20.3" cy="8.4" r="2.2" fill="#b77a86" opacity="0.5"/><circle cx="19.8" cy="7.8" r="2.2" fill="#c5e2cc"/><circle cx="39.4" cy="8.4" r="2.1" fill="#b77a86" opacity="0.5"/><circle cx="38.9" cy="7.8" r="2.1" fill="#e4f2f2"/><circle cx="43.2" cy="9.1" r="2.8" fill="#b77a86" opacity="0.5"/><circle cx="42.7" cy="8.5" r="2.8" fill="#eba39a"/><circle cx="28.3" cy="9.2" r="1.8" fill="#b77a86" opacity="0.5"/><circle cx="27.8" cy="8.6" r="1.8" fill="#f1cda3"/><circle cx="41.9" cy="10.4" r="2.1" fill="#b77a86" opacity="0.5"/><circle cx="41.4" cy="9.8" r="2.1" fill="#f2b9a2"/><circle cx="43.2" cy="10.4" r="2.3" fill="#b77a86" opacity="0.5"/><circle cx="42.7" cy="9.8" r="2.3" fill="#f4f0f0"/><circle cx="28.2" cy="11.0" r="2.8" fill="#b77a86" opacity="0.5"/><circle cx="27.7" cy="10.4" r="2.8" fill="#e38f95"/><circle cx="25.2" cy="11.7" r="2.5" fill="#b77a86" opacity="0.5"/><circle cx="24.7" cy="11.1" r="2.5" fill="#d8a8cc"/><circle cx="23.2" cy="12.1" r="2.8" fill="#b77a86" opacity="0.5"/><circle cx="22.7" cy="11.5" r="2.8" fill="#c5e2cc"/><circle cx="41.2" cy="12.2" r="2.4" fill="#b77a86" opacity="0.5"/><circle cx="40.7" cy="11.6" r="2.4" fill="#eba39a"/><circle cx="41.0" cy="12.4" r="2.1" fill="#b77a86" opacity="0.5"/><circle cx="40.5" cy="11.8" r="2.1" fill="#c5e2cc"/><circle cx="24.2" cy="12.9" r="1.9" fill="#b77a86" opacity="0.5"/><circle cx="23.7" cy="12.3" r="1.9" fill="#e38f95"/><circle cx="13.4" cy="13.0" r="2.1" fill="#b77a86" opacity="0.5"/><circle cx="12.9" cy="12.4" r="2.1" fill="#ffffff"/><circle cx="24.4" cy="13.2" r="2.1" fill="#b77a86" opacity="0.5"/><circle cx="23.9" cy="12.6" r="2.1" fill="#f2b9a2"/><circle cx="16.8" cy="13.5" r="2.2" fill="#b77a86" opacity="0.5"/><circle cx="16.3" cy="12.9" r="2.2" fill="#eeb0bb"/><circle cx="14.9" cy="13.7" r="1.9" fill="#b77a86" opacity="0.5"/><circle cx="14.4" cy="13.1" r="1.9" fill="#f4c3ad"/><circle cx="19.0" cy="13.8" r="2.4" fill="#b77a86" opacity="0.5"/><circle cx="18.5" cy="13.2" r="2.4" fill="#e38f95"/><circle cx="42.1" cy="14.0" r="2.5" fill="#b77a86" opacity="0.5"/><circle cx="41.6" cy="13.4" r="2.5" fill="#eeb0bb"/><circle cx="12.2" cy="14.1" r="2.2" fill="#b77a86" opacity="0.5"/><circle cx="11.7" cy="13.5" r="2.2" fill="#f4f0f0"/><circle cx="31.6" cy="14.2" r="2.7" fill="#b77a86" opacity="0.5"/><circle cx="31.1" cy="13.6" r="2.7" fill="#e7868f"/><circle cx="41.5" cy="14.2" r="2.4" fill="#b77a86" opacity="0.5"/><circle cx="41.0" cy="13.6" r="2.4" fill="#eeb0bb"/><circle cx="40.3" cy="14.3" r="2.3" fill="#b77a86" opacity="0.5"/><circle cx="39.8" cy="13.7" r="2.3" fill="#e38f95"/><circle cx="27.9" cy="14.4" r="2.2" fill="#b77a86" opacity="0.5"/><circle cx="27.4" cy="13.8" r="2.2" fill="#f2b9a2"/><circle cx="46.0" cy="14.5" r="2.3" fill="#b77a86" opacity="0.5"/><circle cx="45.5" cy="13.9" r="2.3" fill="#f2b9a2"/><circle cx="16.3" cy="15.1" r="2.7" fill="#b77a86" opacity="0.5"/><circle cx="15.8" cy="14.5" r="2.7" fill="#f2b9a2"/><circle cx="13.8" cy="15.5" r="2.5" fill="#b77a86" opacity="0.5"/><circle cx="13.3" cy="14.9" r="2.5" fill="#d8a8cc"/><circle cx="42.2" cy="15.5" r="2.6" fill="#b77a86" opacity="0.5"/><circle cx="41.7" cy="14.9" r="2.6" fill="#eba39a"/><circle cx="32.0" cy="15.6" r="2.4" fill="#b77a86" opacity="0.5"/><circle cx="31.5" cy="15.0" r="2.4" fill="#eeb0bb"/><circle cx="37.9" cy="15.7" r="2.5" fill="#b77a86" opacity="0.5"/><circle cx="37.4" cy="15.1" r="2.5" fill="#e38f95"/><circle cx="18.4" cy="15.9" r="2.1" fill="#b77a86" opacity="0.5"/><circle cx="17.9" cy="15.3" r="2.1" fill="#eba39a"/><circle cx="18.5" cy="16.0" r="2.4" fill="#b77a86" opacity="0.5"/><circle cx="18.0" cy="15.4" r="2.4" fill="#e38f95"/><circle cx="48.7" cy="16.2" r="2.2" fill="#b77a86" opacity="0.5"/><circle cx="48.2" cy="15.6" r="2.2" fill="#f4f0f0"/><circle cx="44.2" cy="16.7" r="2.8" fill="#b77a86" opacity="0.5"/><circle cx="43.7" cy="16.1" r="2.8" fill="#f4c3ad"/><circle cx="24.6" cy="16.7" r="2.3" fill="#b77a86" opacity="0.5"/><circle cx="24.1" cy="16.1" r="2.3" fill="#e99aa8"/><circle cx="32.3" cy="17.0" r="2.5" fill="#b77a86" opacity="0.5"/><circle cx="31.8" cy="16.4" r="2.5" fill="#f6eeee"/><circle cx="38.8" cy="17.0" r="2.8" fill="#b77a86" opacity="0.5"/><circle cx="38.3" cy="16.4" r="2.8" fill="#f4c3ad"/><circle cx="17.8" cy="17.3" r="2.4" fill="#b77a86" opacity="0.5"/><circle cx="17.3" cy="16.7" r="2.4" fill="#cdb6dc"/><circle cx="48.8" cy="17.5" r="2.3" fill="#b77a86" opacity="0.5"/><circle cx="48.3" cy="16.9" r="2.3" fill="#eba39a"/><circle cx="18.6" cy="17.6" r="1.9" fill="#b77a86" opacity="0.5"/><circle cx="18.1" cy="17.0" r="1.9" fill="#e99aa8"/><circle cx="39.0" cy="18.1" r="1.9" fill="#b77a86" opacity="0.5"/><circle cx="38.5" cy="17.5" r="1.9" fill="#f4c3ad"/><circle cx="46.7" cy="18.4" r="2.5" fill="#b77a86" opacity="0.5"/><circle cx="46.2" cy="17.8" r="2.5" fill="#e38f95"/><circle cx="19.2" cy="18.8" r="2.1" fill="#b77a86" opacity="0.5"/><circle cx="18.7" cy="18.2" r="2.1" fill="#f4c3ad"/><circle cx="35.8" cy="19.0" r="2.2" fill="#b77a86" opacity="0.5"/><circle cx="35.3" cy="18.4" r="2.2" fill="#eeb0bb"/><circle cx="41.2" cy="19.1" r="2.3" fill="#b77a86" opacity="0.5"/><circle cx="40.7" cy="18.5" r="2.3" fill="#cdb6dc"/><circle cx="9.5" cy="19.2" r="2.5" fill="#b77a86" opacity="0.5"/><circle cx="9.0" cy="18.6" r="2.5" fill="#e7868f"/><circle cx="27.7" cy="19.4" r="1.9" fill="#b77a86" opacity="0.5"/><circle cx="27.2" cy="18.8" r="1.9" fill="#e99aa8"/><circle cx="25.6" cy="19.5" r="2.6" fill="#b77a86" opacity="0.5"/><circle cx="25.1" cy="18.9" r="2.6" fill="#f1cda3"/><circle cx="33.0" cy="19.6" r="2.2" fill="#b77a86" opacity="0.5"/><circle cx="32.5" cy="19.0" r="2.2" fill="#d8a8cc"/><circle cx="33.2" cy="19.8" r="2.5" fill="#b77a86" opacity="0.5"/><circle cx="32.7" cy="19.2" r="2.5" fill="#f2b9a2"/><circle cx="13.2" cy="20.0" r="2.4" fill="#b77a86" opacity="0.5"/><circle cx="12.7" cy="19.4" r="2.4" fill="#eeb0bb"/><circle cx="37.4" cy="20.2" r="2.6" fill="#b77a86" opacity="0.5"/><circle cx="36.9" cy="19.6" r="2.6" fill="#d8a8cc"/><circle cx="23.5" cy="20.4" r="2.0" fill="#b77a86" opacity="0.5"/><circle cx="23.0" cy="19.8" r="2.0" fill="#e99aa8"/><circle cx="44.3" cy="20.5" r="2.7" fill="#b77a86" opacity="0.5"/><circle cx="43.8" cy="19.9" r="2.7" fill="#e7868f"/><circle cx="49.2" cy="20.9" r="1.8" fill="#b77a86" opacity="0.5"/><circle cx="48.7" cy="20.3" r="1.8" fill="#f1cda3"/><circle cx="20.1" cy="20.9" r="2.1" fill="#b77a86" opacity="0.5"/><circle cx="19.6" cy="20.3" r="2.1" fill="#eba39a"/><circle cx="32.2" cy="21.0" r="2.4" fill="#b77a86" opacity="0.5"/><circle cx="31.7" cy="20.4" r="2.4" fill="#e38f95"/><circle cx="8.7" cy="21.2" r="1.9" fill="#b77a86" opacity="0.5"/><circle cx="8.2" cy="20.6" r="1.9" fill="#eba39a"/><circle cx="41.4" cy="21.5" r="2.5" fill="#b77a86" opacity="0.5"/><circle cx="40.9" cy="20.9" r="2.5" fill="#eba39a"/><circle cx="45.0" cy="21.8" r="2.4" fill="#b77a86" opacity="0.5"/><circle cx="44.5" cy="21.2" r="2.4" fill="#eeb0bb"/><circle cx="19.0" cy="21.9" r="2.3" fill="#b77a86" opacity="0.5"/><circle cx="18.5" cy="21.3" r="2.3" fill="#e38f95"/><circle cx="17.9" cy="22.6" r="2.1" fill="#b77a86" opacity="0.5"/><circle cx="17.4" cy="22.0" r="2.1" fill="#e99aa8"/><circle cx="9.4" cy="22.7" r="2.6" fill="#b77a86" opacity="0.5"/><circle cx="8.9" cy="22.1" r="2.6" fill="#c5e2cc"/><circle cx="14.0" cy="22.8" r="1.9" fill="#b77a86" opacity="0.5"/><circle cx="13.5" cy="22.2" r="1.9" fill="#eba39a"/><circle cx="52.9" cy="23.1" r="2.6" fill="#b77a86" opacity="0.5"/><circle cx="52.4" cy="22.5" r="2.6" fill="#cdb6dc"/><circle cx="14.6" cy="23.4" r="2.2" fill="#b77a86" opacity="0.5"/><circle cx="14.1" cy="22.8" r="2.2" fill="#e99aa8"/><circle cx="52.0" cy="23.5" r="2.2" fill="#b77a86" opacity="0.5"/><circle cx="51.5" cy="22.9" r="2.2" fill="#f2b9a2"/><circle cx="27.7" cy="23.5" r="2.8" fill="#b77a86" opacity="0.5"/><circle cx="27.2" cy="22.9" r="2.8" fill="#d8a8cc"/><circle cx="36.9" cy="23.6" r="2.3" fill="#b77a86" opacity="0.5"/><circle cx="36.4" cy="23.0" r="2.3" fill="#f2b9a2"/><circle cx="32.3" cy="23.6" r="2.7" fill="#b77a86" opacity="0.5"/><circle cx="31.8" cy="23.0" r="2.7" fill="#c5e2cc"/><circle cx="46.4" cy="23.7" r="2.2" fill="#b77a86" opacity="0.5"/><circle cx="45.9" cy="23.1" r="2.2" fill="#e38f95"/><circle cx="45.8" cy="23.7" r="2.7" fill="#b77a86" opacity="0.5"/><circle cx="45.3" cy="23.1" r="2.7" fill="#eba39a"/><circle cx="13.2" cy="23.8" r="1.9" fill="#b77a86" opacity="0.5"/><circle cx="12.7" cy="23.2" r="1.9" fill="#eba39a"/><circle cx="39.7" cy="23.9" r="2.3" fill="#b77a86" opacity="0.5"/><circle cx="39.2" cy="23.3" r="2.3" fill="#eeb0bb"/><circle cx="8.6" cy="24.4" r="1.9" fill="#b77a86" opacity="0.5"/><circle cx="8.1" cy="23.8" r="1.9" fill="#ffffff"/><circle cx="20.1" cy="24.5" r="2.5" fill="#b77a86" opacity="0.5"/><circle cx="19.6" cy="23.9" r="2.5" fill="#e99aa8"/><circle cx="51.0" cy="24.6" r="2.1" fill="#b77a86" opacity="0.5"/><circle cx="50.5" cy="24.0" r="2.1" fill="#eba39a"/><circle cx="28.2" cy="24.7" r="2.5" fill="#b77a86" opacity="0.5"/><circle cx="27.7" cy="24.1" r="2.5" fill="#b4d9c2"/><circle cx="46.6" cy="25.1" r="1.9" fill="#b77a86" opacity="0.5"/><circle cx="46.1" cy="24.5" r="1.9" fill="#f2b9a2"/><circle cx="36.1" cy="25.4" r="2.5" fill="#b77a86" opacity="0.5"/><circle cx="35.6" cy="24.8" r="2.5" fill="#f2b9a2"/><circle cx="51.8" cy="25.4" r="2.4" fill="#b77a86" opacity="0.5"/><circle cx="51.3" cy="24.8" r="2.4" fill="#f8e8e8"/><circle cx="37.9" cy="25.4" r="2.7" fill="#b77a86" opacity="0.5"/><circle cx="37.4" cy="24.8" r="2.7" fill="#f6eeee"/><circle cx="21.4" cy="25.4" r="2.2" fill="#b77a86" opacity="0.5"/><circle cx="20.9" cy="24.8" r="2.2" fill="#f6eeee"/><circle cx="21.9" cy="25.5" r="2.1" fill="#b77a86" opacity="0.5"/><circle cx="21.4" cy="24.9" r="2.1" fill="#cdb6dc"/><circle cx="12.9" cy="25.5" r="2.2" fill="#b77a86" opacity="0.5"/><circle cx="12.4" cy="24.9" r="2.2" fill="#f2b9a2"/><circle cx="14.6" cy="25.6" r="2.7" fill="#b77a86" opacity="0.5"/><circle cx="14.1" cy="25.0" r="2.7" fill="#f6eeee"/><circle cx="30.7" cy="25.7" r="2.2" fill="#b77a86" opacity="0.5"/><circle cx="30.2" cy="25.1" r="2.2" fill="#e99aa8"/><circle cx="33.5" cy="25.8" r="2.2" fill="#b77a86" opacity="0.5"/><circle cx="33.0" cy="25.2" r="2.2" fill="#e38f95"/><circle cx="47.6" cy="25.9" r="2.2" fill="#b77a86" opacity="0.5"/><circle cx="47.1" cy="25.3" r="2.2" fill="#e38f95"/><circle cx="47.4" cy="26.0" r="2.4" fill="#b77a86" opacity="0.5"/><circle cx="46.9" cy="25.4" r="2.4" fill="#e99aa8"/><circle cx="36.8" cy="26.0" r="2.3" fill="#b77a86" opacity="0.5"/><circle cx="36.3" cy="25.4" r="2.3" fill="#cdb6dc"/><circle cx="13.9" cy="26.3" r="2.4" fill="#b77a86" opacity="0.5"/><circle cx="13.4" cy="25.7" r="2.4" fill="#f6dcc0"/><circle cx="54.3" cy="26.4" r="2.7" fill="#b77a86" opacity="0.5"/><circle cx="53.8" cy="25.8" r="2.7" fill="#e99aa8"/><circle cx="54.1" cy="26.7" r="2.3" fill="#b77a86" opacity="0.5"/><circle cx="53.6" cy="26.1" r="2.3" fill="#ffffff"/><circle cx="26.7" cy="26.8" r="2.8" fill="#b77a86" opacity="0.5"/><circle cx="26.2" cy="26.2" r="2.8" fill="#eeb0bb"/><circle cx="49.9" cy="26.9" r="2.6" fill="#b77a86" opacity="0.5"/><circle cx="49.4" cy="26.3" r="2.6" fill="#d8a8cc"/><circle cx="10.4" cy="27.0" r="2.3" fill="#b77a86" opacity="0.5"/><circle cx="9.9" cy="26.4" r="2.3" fill="#eba39a"/><circle cx="36.9" cy="27.1" r="1.9" fill="#b77a86" opacity="0.5"/><circle cx="36.4" cy="26.5" r="1.9" fill="#cdb6dc"/><circle cx="9.1" cy="27.2" r="2.5" fill="#b77a86" opacity="0.5"/><circle cx="8.6" cy="26.6" r="2.5" fill="#eba39a"/><circle cx="45.5" cy="27.4" r="1.9" fill="#b77a86" opacity="0.5"/><circle cx="45.0" cy="26.8" r="1.9" fill="#f1cda3"/><circle cx="46.5" cy="27.5" r="1.9" fill="#b77a86" opacity="0.5"/><circle cx="46.0" cy="26.9" r="1.9" fill="#d8a8cc"/><circle cx="20.3" cy="27.5" r="2.4" fill="#b77a86" opacity="0.5"/><circle cx="19.8" cy="26.9" r="2.4" fill="#c5e2cc"/><circle cx="27.7" cy="27.7" r="2.0" fill="#b77a86" opacity="0.5"/><circle cx="27.2" cy="27.1" r="2.0" fill="#e99aa8"/><circle cx="38.2" cy="27.7" r="2.3" fill="#b77a86" opacity="0.5"/><circle cx="37.7" cy="27.1" r="2.3" fill="#c5e2cc"/><circle cx="13.9" cy="27.8" r="2.2" fill="#b77a86" opacity="0.5"/><circle cx="13.4" cy="27.2" r="2.2" fill="#c5e2cc"/><circle cx="24.1" cy="28.3" r="2.8" fill="#b77a86" opacity="0.5"/><circle cx="23.6" cy="27.7" r="2.8" fill="#f2b9a2"/><circle cx="53.2" cy="28.4" r="2.5" fill="#b77a86" opacity="0.5"/><circle cx="52.7" cy="27.8" r="2.5" fill="#ffffff"/><circle cx="11.1" cy="28.4" r="2.2" fill="#b77a86" opacity="0.5"/><circle cx="10.6" cy="27.8" r="2.2" fill="#f6eeee"/><circle cx="8.5" cy="28.6" r="2.5" fill="#b77a86" opacity="0.5"/><circle cx="8.0" cy="28.0" r="2.5" fill="#cdb6dc"/><circle cx="54.7" cy="28.9" r="2.6" fill="#b77a86" opacity="0.5"/><circle cx="54.2" cy="28.3" r="2.6" fill="#f6dcc0"/><circle cx="9.5" cy="29.0" r="2.8" fill="#b77a86" opacity="0.5"/><circle cx="9.0" cy="28.4" r="2.8" fill="#f1cda3"/><circle cx="9.9" cy="29.3" r="2.3" fill="#b77a86" opacity="0.5"/><circle cx="9.4" cy="28.7" r="2.3" fill="#d8a8cc"/><circle cx="41.3" cy="29.3" r="2.6" fill="#b77a86" opacity="0.5"/><circle cx="40.8" cy="28.7" r="2.6" fill="#b4d9c2"/><circle cx="25.8" cy="29.6" r="2.2" fill="#b77a86" opacity="0.5"/><circle cx="25.3" cy="29.0" r="2.2" fill="#e38f95"/><circle cx="26.3" cy="30.4" r="2.5" fill="#b77a86" opacity="0.5"/><circle cx="25.8" cy="29.8" r="2.5" fill="#e99aa8"/><circle cx="39.1" cy="30.4" r="2.2" fill="#b77a86" opacity="0.5"/><circle cx="38.6" cy="29.8" r="2.2" fill="#e7868f"/><circle cx="47.0" cy="30.4" r="2.0" fill="#b77a86" opacity="0.5"/><circle cx="46.5" cy="29.8" r="2.0" fill="#e99aa8"/><circle cx="41.0" cy="30.5" r="2.1" fill="#b77a86" opacity="0.5"/><circle cx="40.5" cy="29.9" r="2.1" fill="#e38f95"/><circle cx="42.8" cy="30.6" r="1.9" fill="#b77a86" opacity="0.5"/><circle cx="42.3" cy="30.0" r="1.9" fill="#e7868f"/><circle cx="18.2" cy="30.7" r="1.9" fill="#b77a86" opacity="0.5"/><circle cx="17.7" cy="30.1" r="1.9" fill="#f2b9a2"/><circle cx="19.7" cy="30.9" r="2.6" fill="#b77a86" opacity="0.5"/><circle cx="19.2" cy="30.3" r="2.6" fill="#d8a8cc"/><circle cx="33.9" cy="31.2" r="1.9" fill="#b77a86" opacity="0.5"/><circle cx="33.4" cy="30.6" r="1.9" fill="#e99aa8"/><circle cx="24.3" cy="31.3" r="2.4" fill="#b77a86" opacity="0.5"/><circle cx="23.8" cy="30.7" r="2.4" fill="#f4c3ad"/><circle cx="16.2" cy="31.3" r="1.8" fill="#b77a86" opacity="0.5"/><circle cx="15.7" cy="30.7" r="1.8" fill="#f6eeee"/><circle cx="9.0" cy="31.6" r="2.0" fill="#b77a86" opacity="0.5"/><circle cx="8.5" cy="31.0" r="2.0" fill="#eba39a"/><circle cx="31.7" cy="31.8" r="2.0" fill="#b77a86" opacity="0.5"/><circle cx="31.2" cy="31.2" r="2.0" fill="#e99aa8"/><circle cx="49.6" cy="31.9" r="2.4" fill="#b77a86" opacity="0.5"/><circle cx="49.1" cy="31.3" r="2.4" fill="#b4d9c2"/><circle cx="29.9" cy="31.9" r="2.0" fill="#b77a86" opacity="0.5"/><circle cx="29.4" cy="31.3" r="2.0" fill="#e99aa8"/><circle cx="53.4" cy="31.9" r="2.4" fill="#b77a86" opacity="0.5"/><circle cx="52.9" cy="31.3" r="2.4" fill="#e4f2f2"/><circle cx="33.8" cy="32.2" r="2.4" fill="#b77a86" opacity="0.5"/><circle cx="33.3" cy="31.6" r="2.4" fill="#f6eeee"/><circle cx="46.5" cy="32.4" r="2.3" fill="#b77a86" opacity="0.5"/><circle cx="46.0" cy="31.8" r="2.3" fill="#f6dcc0"/><circle cx="17.4" cy="32.7" r="2.8" fill="#b77a86" opacity="0.5"/><circle cx="16.9" cy="32.1" r="2.8" fill="#e38f95"/><circle cx="48.8" cy="32.8" r="2.6" fill="#b77a86" opacity="0.5"/><circle cx="48.3" cy="32.2" r="2.6" fill="#d8a8cc"/><circle cx="32.9" cy="32.8" r="2.7" fill="#b77a86" opacity="0.5"/><circle cx="32.4" cy="32.2" r="2.7" fill="#eba39a"/><circle cx="34.9" cy="32.8" r="2.0" fill="#b77a86" opacity="0.5"/><circle cx="34.4" cy="32.2" r="2.0" fill="#e38f95"/><circle cx="23.0" cy="33.0" r="2.6" fill="#b77a86" opacity="0.5"/><circle cx="22.5" cy="32.4" r="2.6" fill="#e99aa8"/><circle cx="17.6" cy="33.2" r="2.6" fill="#b77a86" opacity="0.5"/><circle cx="17.1" cy="32.6" r="2.6" fill="#e7868f"/><circle cx="33.4" cy="33.3" r="2.6" fill="#b77a86" opacity="0.5"/><circle cx="32.9" cy="32.7" r="2.6" fill="#cdb6dc"/><circle cx="40.7" cy="34.1" r="2.7" fill="#b77a86" opacity="0.5"/><circle cx="40.2" cy="33.5" r="2.7" fill="#eba39a"/><circle cx="9.0" cy="34.3" r="2.7" fill="#b77a86" opacity="0.5"/><circle cx="8.5" cy="33.7" r="2.7" fill="#f1cda3"/><circle cx="12.3" cy="34.6" r="2.3" fill="#b77a86" opacity="0.5"/><circle cx="11.8" cy="34.0" r="2.3" fill="#f1cda3"/><circle cx="53.6" cy="35.0" r="2.2" fill="#b77a86" opacity="0.5"/><circle cx="53.1" cy="34.4" r="2.2" fill="#f4f0f0"/><circle cx="32.5" cy="35.2" r="1.9" fill="#b77a86" opacity="0.5"/><circle cx="32.0" cy="34.6" r="1.9" fill="#c5e2cc"/><circle cx="28.4" cy="35.5" r="2.6" fill="#b77a86" opacity="0.5"/><circle cx="27.9" cy="34.9" r="2.6" fill="#f6eeee"/><circle cx="28.1" cy="35.5" r="2.5" fill="#b77a86" opacity="0.5"/><circle cx="27.6" cy="34.9" r="2.5" fill="#eba39a"/><circle cx="36.1" cy="36.5" r="2.3" fill="#b77a86" opacity="0.5"/><circle cx="35.6" cy="35.9" r="2.3" fill="#d8a8cc"/><circle cx="42.2" cy="36.5" r="2.4" fill="#b77a86" opacity="0.5"/><circle cx="41.7" cy="35.9" r="2.4" fill="#eba39a"/><circle cx="41.3" cy="36.7" r="2.0" fill="#b77a86" opacity="0.5"/><circle cx="40.8" cy="36.1" r="2.0" fill="#e99aa8"/><circle cx="29.5" cy="36.8" r="1.9" fill="#b77a86" opacity="0.5"/><circle cx="29.0" cy="36.2" r="1.9" fill="#f6eeee"/><circle cx="44.3" cy="37.2" r="2.2" fill="#b77a86" opacity="0.5"/><circle cx="43.8" cy="36.6" r="2.2" fill="#eba39a"/><circle cx="8.9" cy="37.3" r="2.7" fill="#b77a86" opacity="0.5"/><circle cx="8.4" cy="36.7" r="2.7" fill="#d8a8cc"/><circle cx="8.9" cy="37.4" r="1.8" fill="#b77a86" opacity="0.5"/><circle cx="8.4" cy="36.8" r="1.8" fill="#e4f2f2"/><circle cx="39.1" cy="37.4" r="2.0" fill="#b77a86" opacity="0.5"/><circle cx="38.6" cy="36.8" r="2.0" fill="#e99aa8"/><circle cx="46.3" cy="37.4" r="2.6" fill="#b77a86" opacity="0.5"/><circle cx="45.8" cy="36.8" r="2.6" fill="#b4d9c2"/><circle cx="8.2" cy="37.4" r="2.3" fill="#b77a86" opacity="0.5"/><circle cx="7.7" cy="36.8" r="2.3" fill="#f8e8e8"/><circle cx="47.6" cy="37.8" r="2.6" fill="#b77a86" opacity="0.5"/><circle cx="47.1" cy="37.2" r="2.6" fill="#e99aa8"/><circle cx="34.0" cy="37.9" r="2.1" fill="#b77a86" opacity="0.5"/><circle cx="33.5" cy="37.3" r="2.1" fill="#f2b9a2"/><circle cx="52.3" cy="38.2" r="2.5" fill="#b77a86" opacity="0.5"/><circle cx="51.8" cy="37.6" r="2.5" fill="#f8e8e8"/><circle cx="47.3" cy="38.6" r="1.9" fill="#b77a86" opacity="0.5"/><circle cx="46.8" cy="38.0" r="1.9" fill="#eba39a"/><circle cx="33.0" cy="38.8" r="2.5" fill="#b77a86" opacity="0.5"/><circle cx="32.5" cy="38.2" r="2.5" fill="#e99aa8"/><circle cx="28.3" cy="39.1" r="2.5" fill="#b77a86" opacity="0.5"/><circle cx="27.8" cy="38.5" r="2.5" fill="#d8a8cc"/><circle cx="45.9" cy="39.2" r="1.9" fill="#b77a86" opacity="0.5"/><circle cx="45.4" cy="38.6" r="1.9" fill="#cdb6dc"/><circle cx="34.5" cy="39.3" r="2.7" fill="#b77a86" opacity="0.5"/><circle cx="34.0" cy="38.7" r="2.7" fill="#e38f95"/><circle cx="41.9" cy="39.7" r="2.3" fill="#b77a86" opacity="0.5"/><circle cx="41.4" cy="39.1" r="2.3" fill="#b4d9c2"/><circle cx="48.5" cy="39.8" r="1.9" fill="#b77a86" opacity="0.5"/><circle cx="48.0" cy="39.2" r="1.9" fill="#f2b9a2"/><circle cx="30.0" cy="39.8" r="2.7" fill="#b77a86" opacity="0.5"/><circle cx="29.5" cy="39.2" r="2.7" fill="#c5e2cc"/><circle cx="25.3" cy="39.9" r="2.5" fill="#b77a86" opacity="0.5"/><circle cx="24.8" cy="39.3" r="2.5" fill="#f6dcc0"/><circle cx="10.9" cy="39.9" r="2.7" fill="#b77a86" opacity="0.5"/><circle cx="10.4" cy="39.3" r="2.7" fill="#f8e8e8"/><circle cx="30.0" cy="40.0" r="2.8" fill="#b77a86" opacity="0.5"/><circle cx="29.5" cy="39.4" r="2.8" fill="#c5e2cc"/><circle cx="34.1" cy="40.1" r="2.4" fill="#b77a86" opacity="0.5"/><circle cx="33.6" cy="39.5" r="2.4" fill="#c5e2cc"/><circle cx="18.7" cy="40.2" r="2.0" fill="#b77a86" opacity="0.5"/><circle cx="18.2" cy="39.6" r="2.0" fill="#eba39a"/><circle cx="34.5" cy="40.3" r="1.9" fill="#b77a86" opacity="0.5"/><circle cx="34.0" cy="39.7" r="1.9" fill="#e38f95"/><circle cx="41.4" cy="40.6" r="2.1" fill="#b77a86" opacity="0.5"/><circle cx="40.9" cy="40.0" r="2.1" fill="#f2b9a2"/><circle cx="13.2" cy="40.7" r="2.4" fill="#b77a86" opacity="0.5"/><circle cx="12.7" cy="40.1" r="2.4" fill="#f4c3ad"/><circle cx="48.7" cy="41.0" r="1.9" fill="#b77a86" opacity="0.5"/><circle cx="48.2" cy="40.4" r="1.9" fill="#ffffff"/><circle cx="18.5" cy="41.0" r="2.5" fill="#b77a86" opacity="0.5"/><circle cx="18.0" cy="40.4" r="2.5" fill="#eba39a"/><circle cx="41.4" cy="41.1" r="2.0" fill="#b77a86" opacity="0.5"/><circle cx="40.9" cy="40.5" r="2.0" fill="#b4d9c2"/><circle cx="32.9" cy="41.2" r="2.6" fill="#b77a86" opacity="0.5"/><circle cx="32.4" cy="40.6" r="2.6" fill="#e38f95"/><circle cx="42.7" cy="41.3" r="1.9" fill="#b77a86" opacity="0.5"/><circle cx="42.2" cy="40.7" r="1.9" fill="#eeb0bb"/><circle cx="33.0" cy="41.5" r="2.0" fill="#b77a86" opacity="0.5"/><circle cx="32.5" cy="40.9" r="2.0" fill="#e99aa8"/><circle cx="12.0" cy="41.9" r="2.1" fill="#b77a86" opacity="0.5"/><circle cx="11.5" cy="41.3" r="2.1" fill="#ffffff"/><circle cx="46.7" cy="41.9" r="2.7" fill="#b77a86" opacity="0.5"/><circle cx="46.2" cy="41.3" r="2.7" fill="#cdb6dc"/><circle cx="16.7" cy="42.0" r="2.0" fill="#b77a86" opacity="0.5"/><circle cx="16.2" cy="41.4" r="2.0" fill="#e99aa8"/><circle cx="41.4" cy="42.1" r="2.5" fill="#b77a86" opacity="0.5"/><circle cx="40.9" cy="41.5" r="2.5" fill="#e99aa8"/><circle cx="36.7" cy="42.4" r="2.7" fill="#b77a86" opacity="0.5"/><circle cx="36.2" cy="41.8" r="2.7" fill="#f4c3ad"/><circle cx="12.7" cy="42.6" r="2.4" fill="#b77a86" opacity="0.5"/><circle cx="12.2" cy="42.0" r="2.4" fill="#d8a8cc"/><circle cx="24.2" cy="43.1" r="2.6" fill="#b77a86" opacity="0.5"/><circle cx="23.7" cy="42.5" r="2.6" fill="#f2b9a2"/><circle cx="28.0" cy="43.3" r="2.8" fill="#b77a86" opacity="0.5"/><circle cx="27.5" cy="42.7" r="2.8" fill="#e99aa8"/><circle cx="49.9" cy="43.4" r="2.1" fill="#b77a86" opacity="0.5"/><circle cx="49.4" cy="42.8" r="2.1" fill="#f4f0f0"/><circle cx="43.5" cy="43.4" r="1.9" fill="#b77a86" opacity="0.5"/><circle cx="43.0" cy="42.8" r="1.9" fill="#d8a8cc"/><circle cx="22.2" cy="43.9" r="2.3" fill="#b77a86" opacity="0.5"/><circle cx="21.7" cy="43.3" r="2.3" fill="#e38f95"/><circle cx="33.8" cy="43.9" r="2.6" fill="#b77a86" opacity="0.5"/><circle cx="33.3" cy="43.3" r="2.6" fill="#cdb6dc"/><circle cx="18.0" cy="44.2" r="2.0" fill="#b77a86" opacity="0.5"/><circle cx="17.5" cy="43.6" r="2.0" fill="#eeb0bb"/><circle cx="35.2" cy="44.3" r="2.7" fill="#b77a86" opacity="0.5"/><circle cx="34.7" cy="43.7" r="2.7" fill="#c5e2cc"/><circle cx="33.6" cy="44.4" r="2.2" fill="#b77a86" opacity="0.5"/><circle cx="33.1" cy="43.8" r="2.2" fill="#eeb0bb"/><circle cx="37.1" cy="45.1" r="1.9" fill="#b77a86" opacity="0.5"/><circle cx="36.6" cy="44.5" r="1.9" fill="#f4c3ad"/><circle cx="17.8" cy="45.3" r="2.8" fill="#b77a86" opacity="0.5"/><circle cx="17.3" cy="44.7" r="2.8" fill="#b4d9c2"/><circle cx="28.0" cy="45.7" r="2.5" fill="#b77a86" opacity="0.5"/><circle cx="27.5" cy="45.1" r="2.5" fill="#f4c3ad"/><circle cx="33.2" cy="46.5" r="2.0" fill="#b77a86" opacity="0.5"/><circle cx="32.7" cy="45.9" r="2.0" fill="#f6dcc0"/><circle cx="14.9" cy="46.6" r="2.0" fill="#b77a86" opacity="0.5"/><circle cx="14.4" cy="46.0" r="2.0" fill="#f6eeee"/><circle cx="20.6" cy="46.7" r="2.0" fill="#b77a86" opacity="0.5"/><circle cx="20.1" cy="46.1" r="2.0" fill="#eba39a"/><circle cx="37.0" cy="46.9" r="2.5" fill="#b77a86" opacity="0.5"/><circle cx="36.5" cy="46.3" r="2.5" fill="#eeb0bb"/><circle cx="39.5" cy="47.5" r="2.7" fill="#b77a86" opacity="0.5"/><circle cx="39.0" cy="46.9" r="2.7" fill="#f2b9a2"/><circle cx="35.6" cy="47.6" r="2.3" fill="#b77a86" opacity="0.5"/><circle cx="35.1" cy="47.0" r="2.3" fill="#e38f95"/><circle cx="18.8" cy="47.7" r="1.9" fill="#b77a86" opacity="0.5"/><circle cx="18.3" cy="47.1" r="1.9" fill="#eba39a"/><circle cx="30.8" cy="47.9" r="2.3" fill="#b77a86" opacity="0.5"/><circle cx="30.3" cy="47.3" r="2.3" fill="#f1cda3"/><circle cx="23.6" cy="48.1" r="2.4" fill="#b77a86" opacity="0.5"/><circle cx="23.1" cy="47.5" r="2.4" fill="#eeb0bb"/><circle cx="37.7" cy="48.5" r="2.7" fill="#b77a86" opacity="0.5"/><circle cx="37.2" cy="47.9" r="2.7" fill="#f2b9a2"/><circle cx="24.7" cy="49.2" r="2.6" fill="#b77a86" opacity="0.5"/><circle cx="24.2" cy="48.6" r="2.6" fill="#e7868f"/><circle cx="22.0" cy="49.2" r="2.1" fill="#b77a86" opacity="0.5"/><circle cx="21.5" cy="48.6" r="2.1" fill="#ffffff"/><circle cx="31.5" cy="49.4" r="2.0" fill="#b77a86" opacity="0.5"/><circle cx="31.0" cy="48.8" r="2.0" fill="#f1cda3"/><circle cx="21.0" cy="49.5" r="2.0" fill="#b77a86" opacity="0.5"/><circle cx="20.5" cy="48.9" r="2.0" fill="#eeb0bb"/><circle cx="31.4" cy="49.8" r="1.9" fill="#b77a86" opacity="0.5"/><circle cx="30.9" cy="49.2" r="1.9" fill="#eeb0bb"/><circle cx="19.9" cy="50.0" r="2.1" fill="#b77a86" opacity="0.5"/><circle cx="19.4" cy="49.4" r="2.1" fill="#f4f0f0"/><circle cx="20.6" cy="50.5" r="2.2" fill="#b77a86" opacity="0.5"/><circle cx="20.1" cy="49.9" r="2.2" fill="#d8a8cc"/><circle cx="22.2" cy="50.6" r="1.8" fill="#b77a86" opacity="0.5"/><circle cx="21.7" cy="50.0" r="1.8" fill="#eeb0bb"/><circle cx="35.9" cy="50.7" r="2.3" fill="#b77a86" opacity="0.5"/><circle cx="35.4" cy="50.1" r="2.3" fill="#f4f0f0"/><circle cx="29.0" cy="51.1" r="2.3" fill="#b77a86" opacity="0.5"/><circle cx="28.5" cy="50.5" r="2.3" fill="#e4f2f2"/><circle cx="19.6" cy="51.1" r="2.1" fill="#b77a86" opacity="0.5"/><circle cx="19.1" cy="50.5" r="2.1" fill="#f2b9a2"/><circle cx="37.9" cy="51.4" r="2.2" fill="#b77a86" opacity="0.5"/><circle cx="37.4" cy="50.8" r="2.2" fill="#f4f0f0"/><circle cx="35.4" cy="51.5" r="2.2" fill="#b77a86" opacity="0.5"/><circle cx="34.9" cy="50.9" r="2.2" fill="#e4f2f2"/><circle cx="34.9" cy="52.9" r="2.6" fill="#b77a86" opacity="0.5"/><circle cx="34.4" cy="52.3" r="2.6" fill="#d8a8cc"/></g>
 <path d="M21 50 L23 64 M38 50 L35.5 64 M29.5 53 L29.5 64" stroke="#bfe0e4" stroke-width="0.6"/>
 <rect x="21.5" y="64" width="17" height="13" fill="#d4d4d8"/>
 <rect x="21.5" y="64" width="17" height="2.5" fill="#f0f0f2"/>
 <rect x="26.5" y="66" width="2" height="11" fill="#7c7c86"/>
 <rect x="31.5" y="66" width="1.5" height="11" fill="#9898a4"/>
 <rect x="21.5" y="66" width="1.5" height="11" fill="#b0b0b8"/>
</svg>

<!-- right page title decoration -->
<div class="a" style="left:577px;top:212px;width:12px;height:0;border-top:1px dotted #c8eef0"></div>
<div class="a" style="left:589px;top:209.5px;width:6px;height:2px;background:#b8e4e8;opacity:0.8"></div>
<div class="a" style="left:589px;top:213.5px;width:5px;height:2px;background:#b8e4e8;opacity:0.7"></div>

<!-- image placeholder -->
<svg class="a" style="left:582px;top:361px" width="32" height="25" viewBox="0 0 32 25">
 <g transform="rotate(-6 10 11)"><rect x="3" y="3" width="15" height="16" rx="1" fill="#ebebeb" stroke="#a9a9a9" stroke-width="1.6"/><path d="M4 18 L8 10 L11 14 L13 11 L17 18 Z" fill="#a9a9a9"/></g>
 <g transform="rotate(8 22 15)"><rect x="15" y="7" width="15" height="14" rx="1" fill="#ebebeb" stroke="#a9a9a9" stroke-width="1.6"/><path d="M16 20 L20 13 L23 17 L25 14 L29 20 Z" fill="#a9a9a9"/></g>
</svg>

<!-- QQ icons -->
<svg class="a" style="left:489px;top:550px" width="18" height="13" viewBox="0 0 18 13"><path d="M0.8 2.2 Q3.5 -0.5 7 1.2 Q7.5 3.5 5.2 5.8 Q2 5 0.8 2.2 Z" fill="#5b9bd8"/><path d="M2 2 Q3.5 1 5.5 1.6" stroke="#cfe4f6" stroke-width="0.8" fill="none"/><ellipse cx="11.8" cy="6.2" rx="4" ry="5" fill="#1e1e1e"/><ellipse cx="11.8" cy="8" rx="2.8" ry="2.8" fill="#f6efe6"/><path d="M8.2 6.6 Q11.8 8.6 15.4 6.6 L15 8.2 Q11.8 9.8 8.6 8.2 Z" fill="#d42626"/><ellipse cx="9.3" cy="11.8" rx="2.2" ry="1" fill="#eaa424"/><ellipse cx="14.3" cy="11.8" rx="2.2" ry="1" fill="#eaa424"/></svg>
<svg class="a" style="left:522px;top:550px" width="18" height="13" viewBox="0 0 18 13"><path d="M0.8 2.2 Q3.5 -0.5 7 1.2 Q7.5 3.5 5.2 5.8 Q2 5 0.8 2.2 Z" fill="#5b9bd8"/><path d="M2 2 Q3.5 1 5.5 1.6" stroke="#cfe4f6" stroke-width="0.8" fill="none"/><ellipse cx="11.8" cy="6.2" rx="4" ry="5" fill="#1e1e1e"/><ellipse cx="11.8" cy="8" rx="2.8" ry="2.8" fill="#f6efe6"/><path d="M8.2 6.6 Q11.8 8.6 15.4 6.6 L15 8.2 Q11.8 9.8 8.6 8.2 Z" fill="#d42626"/><ellipse cx="9.3" cy="11.8" rx="2.2" ry="1" fill="#eaa424"/><ellipse cx="14.3" cy="11.8" rx="2.2" ry="1" fill="#eaa424"/></svg>

<div class="t" id="title" style="left:21.9px;top:10.36px;font-size:10.08px;letter-spacing:-0.234px;font-family:'Liberation Sans',sans-serif;color:#40556a">Youtu Designer</div>
<div class="t" id="m0" style="left:18.6px;top:26.37px;font-size:10px;letter-spacing:-0.8px;font-family:'Liberation Serif',serif;color:#ffffff;-webkit-text-stroke:0.15px #ffffff">首页</div>
<div class="t" id="m1" style="left:63.0px;top:26.37px;font-size:10px;letter-spacing:-0.8px;font-family:'Liberation Serif',serif;color:#222;-webkit-text-stroke:0.15px #222">文件</div>
<div class="t" id="m2" style="left:107.2px;top:26.37px;font-size:10px;letter-spacing:-0.8px;font-family:'Liberation Serif',serif;color:#222;-webkit-text-stroke:0.15px #222">编辑</div>
<div class="t" id="m3" style="left:151.2px;top:26.37px;font-size:10px;letter-spacing:-0.8px;font-family:'Liberation Serif',serif;color:#222;-webkit-text-stroke:0.15px #222">插入</div>
<div class="t" id="m4" style="left:195.9px;top:26.37px;font-size:10px;letter-spacing:0.2px;font-family:'Liberation Serif',serif;color:#222;-webkit-text-stroke:0.15px #222">视图</div>
<div class="t" id="m5" style="left:240.0px;top:26.37px;font-size:10px;letter-spacing:-0.8px;font-family:'Liberation Serif',serif;color:#222;-webkit-text-stroke:0.15px #222">帮助</div>
<div class="t" id="m6" style="left:266.0px;top:26.33px;font-size:10px;letter-spacing:0.266px;font-family:'Liberation Serif',serif;color:#222;-webkit-text-stroke:0.15px #222">画册-竖款:竖款A4/12寸（210x285mm）24页 - 时光旅行</div>
<div class="t" id="m7" style="left:524.0px;top:27.44px;font-size:10.3px;letter-spacing:0.333px;font-family:'Liberation Serif',serif;color:#222;-webkit-text-stroke:0.15px #222">切换尺寸</div>
<div class="t" id="m8" style="left:569.1px;top:27.33px;font-size:10.3px;letter-spacing:-0.2px;font-family:'Liberation Serif',serif;color:#222;-webkit-text-stroke:0.15px #222">充值</div>
<div class="t" id="m9" style="left:609.3px;top:27.69px;font-size:10.3px;letter-spacing:0.339px;font-family:'Liberation Serif',serif;color:#ffffff;-webkit-text-stroke:0.15px #ffffff">免费用户</div>
<div class="t" id="m10" style="left:670.2px;top:26.37px;font-size:10px;letter-spacing:0.004px;font-family:'Liberation Serif',serif;color:#222;-webkit-text-stroke:0.15px #222">会员中心</div>
<div class="t" id="m11" style="left:725.5px;top:26.37px;font-size:10px;letter-spacing:0.0px;font-family:'Liberation Serif',serif;color:#222;-webkit-text-stroke:0.15px #222">登出</div>
<div class="t" id="c1" style="left:67.4px;top:47.83px;font-size:10px;letter-spacing:0.6px;font-family:'Liberation Serif',serif;color:#222;-webkit-text-stroke:0.15px #222">选择快捷工具</div>
<div class="t" id="c2" style="left:444.5px;top:47.61px;font-size:10px;letter-spacing:0.666px;font-family:'Liberation Serif',serif;color:#222;-webkit-text-stroke:0.15px #222">封底封面</div>
<div class="t" id="c3" style="left:510.2px;top:46.37px;font-size:12.45px;letter-spacing:-2.072px;font-family:'Liberation Serif',serif;color:#222">100%</div>
<div class="t" id="b0" style="left:578.0px;top:47.61px;font-size:9px;letter-spacing:-0.8px;font-family:'Liberation Serif',serif;color:#f3cfc2">加页</div>
<div class="t" id="b1" style="left:610.1px;top:47.61px;font-size:9px;letter-spacing:-0.8px;font-family:'Liberation Serif',serif;color:#e0603e">保存</div>
<div class="t" id="b2" style="left:642.7px;top:47.61px;font-size:9px;letter-spacing:1.0px;font-family:'Liberation Serif',serif;color:#e0603e">导出</div>
<div class="t" id="b3" style="left:675.4px;top:47.61px;font-size:9px;letter-spacing:-0.8px;font-family:'Liberation Serif',serif;color:#e0603e">发布</div>
<div class="t" id="b4" style="left:707.9px;top:47.61px;font-size:9px;letter-spacing:-0.0px;font-family:'Liberation Serif',serif;color:#e0603e">印刷</div>
<div class="t" id="tb0" style="left:29.8px;top:75.64px;font-size:10.15px;letter-spacing:-0.8px;font-family:'Liberation Serif',serif;color:#ffffff;-webkit-text-stroke:0.15px #ffffff">图片</div>
<div class="t" id="tb1" style="left:97.3px;top:75.64px;font-size:10.15px;letter-spacing:0.2px;font-family:'Liberation Serif',serif;color:#222;-webkit-text-stroke:0.15px #222">布局</div>
<div class="t" id="tb2" style="left:165.35px;top:75.64px;font-size:10.15px;letter-spacing:0.5px;font-family:'Liberation Serif',serif;color:#222;-webkit-text-stroke:0.15px #222">素材</div>
<div class="t" id="p0" style="left:37.7px;top:109.67px;font-size:7.8px;letter-spacing:1.0px;font-family:'Liberation Serif',serif;color:#222;-webkit-text-stroke:0.15px #222">图片</div>
<div class="t" id="p1" style="left:82.9px;top:107.46px;font-size:9.6px;letter-spacing:-1.2px;font-family:'Liberation Serif',serif;color:#222">PDF</div>
<div class="t" id="p2" style="left:126.5px;top:107.46px;font-size:9.6px;letter-spacing:-1.2px;font-family:'Liberation Serif',serif;color:#222">PSD</div>
<div class="t" id="p3" style="left:169.1px;top:110.07px;font-size:7.8px;letter-spacing:1.0px;font-family:'Liberation Serif',serif;color:#222;-webkit-text-stroke:0.15px #222">文件夹</div>
<div class="t" id="s0" style="left:17.35px;top:125.4px;font-size:10.5px;letter-spacing:-0.55px;font-family:'Liberation Serif',serif;color:#4a4a4a;-webkit-text-stroke:0.15px #4a4a4a">未使用</div>
<div class="t" id="s1" style="left:18.4px;top:146.16px;font-size:10.5px;letter-spacing:-0.8px;font-family:'Liberation Serif',serif;color:#4a4a4a;-webkit-text-stroke:0.15px #4a4a4a">全部</div>
<div class="t" id="s2" style="left:98.5px;top:125.89px;font-size:10.5px;letter-spacing:-0.8px;font-family:'Liberation Serif',serif;color:#4a4a4a;-webkit-text-stroke:0.15px #4a4a4a">未分组</div>
<div class="t" id="s3" style="left:99.3px;top:146.09px;font-size:10.5px;letter-spacing:-0.667px;font-family:'Liberation Serif',serif;color:#4a4a4a;-webkit-text-stroke:0.15px #4a4a4a">由远及近</div>
<div class="t" id="h0" style="left:13.8px;top:496.56px;font-size:8.53px;letter-spacing:0.95px;font-family:'Liberation Serif',serif;color:#333;-webkit-text-stroke:0.15px #333">按住Ctrl、Shift多选，右键删除图片</div>
<div class="t" id="x0" style="left:24.8px;top:515.04px;font-size:9.5px;letter-spacing:-1.0px;font-family:'Liberation Serif',serif;color:#888">X:</div>
<div class="t" id="x1" style="left:54.4px;top:516.04px;font-size:8.4px;letter-spacing:-0.0px;font-family:'Liberation Serif',serif;color:#8a8a8a">3.6</div>
<div class="t" id="x2" style="left:83.7px;top:515.73px;font-size:8.6px;letter-spacing:-0.8px;font-family:'Liberation Serif',serif;color:#888;-webkit-text-stroke:0.15px #888">毫米</div>
<div class="t" id="y0" style="left:25.7px;top:532.01px;font-size:9.5px;letter-spacing:-0.6px;font-family:'Liberation Serif',serif;color:#888">Y:</div>
<div class="t" id="y1" style="left:53.0px;top:532.75px;font-size:8.4px;letter-spacing:0.25px;font-family:'Liberation Serif',serif;color:#8a8a8a">148.8</div>
<div class="t" id="y2" style="left:83.7px;top:531.87px;font-size:8.6px;letter-spacing:-0.8px;font-family:'Liberation Serif',serif;color:#888;-webkit-text-stroke:0.15px #888">毫米</div>
<div class="t" id="w0" style="left:108.75px;top:515.07px;font-size:8.5px;letter-spacing:-0.0px;font-family:'Liberation Serif',serif;color:#888;-webkit-text-stroke:0.15px #888">宽:</div>
<div class="t" id="w1" style="left:140.8px;top:516.12px;font-size:8.4px;letter-spacing:0px;font-family:'Liberation Serif',serif;color:#8a8a8a">0</div>
<div class="t" id="w2" style="left:169.9px;top:515.73px;font-size:8.6px;letter-spacing:0.3px;font-family:'Liberation Serif',serif;color:#888;-webkit-text-stroke:0.15px #888">毫米</div>
<div class="t" id="g0" style="left:108.75px;top:531.87px;font-size:8.5px;letter-spacing:-0.0px;font-family:'Liberation Serif',serif;color:#888;-webkit-text-stroke:0.15px #888">高:</div>
<div class="t" id="g1" style="left:140.8px;top:532.75px;font-size:8.4px;letter-spacing:0px;font-family:'Liberation Serif',serif;color:#8a8a8a">0</div>
<div class="t" id="g2" style="left:169.9px;top:531.87px;font-size:8.6px;letter-spacing:0.3px;font-family:'Liberation Serif',serif;color:#888;-webkit-text-stroke:0.15px #888">毫米</div>
<div class="t" id="st0" style="left:194.7px;top:552.5px;font-size:10px;letter-spacing:0.369px;font-family:'Liberation Serif',serif;color:#222;-webkit-text-stroke:0.15px #222">© 2015-2018 有图互联版权所有</div>
<div class="t" id="st1" style="left:357.6px;top:552.5px;font-size:10px;letter-spacing:0.438px;font-family:'Liberation Serif',serif;color:#222;-webkit-text-stroke:0.15px #222">电话：400-011-0521</div>
<div class="t" id="st2" style="left:466.3px;top:552.5px;font-size:10px;letter-spacing:-0.0px;font-family:'Liberation Serif',serif;color:#222;-webkit-text-stroke:0.15px #222">客服:</div>
<div class="t" id="st3" style="left:512.2px;top:551.53px;font-size:11px;letter-spacing:-1.1px;font-family:'Liberation Serif',serif;color:#333">01</div>
<div class="t" id="st4" style="left:545.2px;top:551.53px;font-size:11px;letter-spacing:-1.0px;font-family:'Liberation Serif',serif;color:#333">02</div>
<div class="t" id="v0" style="left:594.6px;top:197.21px;font-size:15px;letter-spacing:0px;font-family:'Liberation Serif',serif;color:#ffffff;-webkit-text-stroke:0.15px #ffffff">时</div>
<div class="t" id="v1" style="left:595.6px;top:217.56px;font-size:15px;letter-spacing:0px;font-family:'Liberation Serif',serif;color:#ffffff;-webkit-text-stroke:0.15px #ffffff">光</div>
<div class="t" id="v2" style="left:595.6px;top:232.05px;font-size:15px;letter-spacing:0px;font-family:'Liberation Serif',serif;color:#ffffff;-webkit-text-stroke:0.15px #ffffff">旅</div>
<div class="t" id="v3" style="left:595.6px;top:249.41px;font-size:15px;letter-spacing:0px;font-family:'Liberation Serif',serif;color:#ffffff;-webkit-text-stroke:0.15px #ffffff">行</div>
<div class="t" id="wm" style="left:577.1px;top:529.79px;font-size:31.5px;letter-spacing:-1.75px;font-family:'Liberation Sans',sans-serif;color:#5a8ccc;font-weight:bold;background:linear-gradient(#6eb2e4 15%,#5a96d4 50%,#4070c0 85%);-webkit-background-clip:text;background-clip:text;color:transparent">极速下载站</div>
<!-- frame overlay -->
<div class="a" style="left:0;top:22px;width:6px;height:553px;background:linear-gradient(90deg,#737b80 0,#737b80 1px,#eef4f9 1px,#e2eaf2 6px)"></div>
<div class="a" style="left:0;top:0;width:1px;height:22px;background:#737b80"></div>
<div class="a" style="left:744px;top:22px;width:6px;height:553px;background:linear-gradient(90deg,#d5e0ea 0,#d5e0ea 4.5px,#f2f6fa 4.5px,#f2f6fa 5px,#6c7476 5px)"></div>
<div class="a" style="left:0;top:569px;width:750px;height:6px;background:linear-gradient(#d5e0ea 0,#d5e0ea 4.5px,#848c92 4.5px)"></div>

<div class="a" style="left:747px;top:0;width:3px;height:4px;background:linear-gradient(225deg,#2a8a80 40%,transparent 60%)"></div>

</body></html>
